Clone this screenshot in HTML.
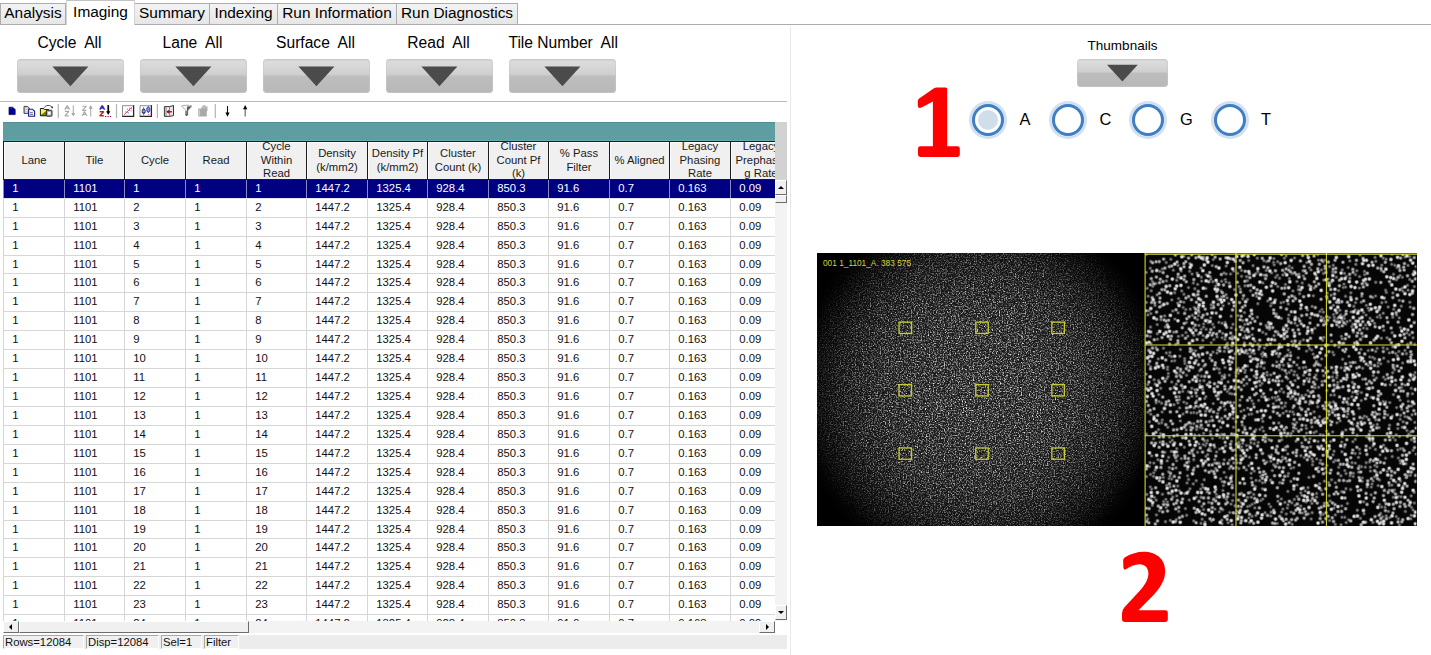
<!DOCTYPE html><html><head><meta charset="utf-8"><title>SAV</title><style>
*{box-sizing:border-box;margin:0;padding:0}
html,body{width:1431px;height:655px;overflow:hidden;background:#fff;font-family:"Liberation Sans",sans-serif;color:#000}
.abs{position:absolute}
#tabs{position:absolute;left:0;top:0;width:1431px;height:25px;border-bottom:1px solid #acacac}
.tab{position:absolute;top:3px;height:22px;background:linear-gradient(#f3f3f3,#e6e6e6);border:1px solid #acacac;font-size:15.4px;line-height:17.5px;text-align:center;white-space:nowrap}
.tab.sel{top:0;height:25px;background:#fff;border-color:#c4c4c4 #d4d4d4;border-bottom:none;line-height:22px;z-index:2}
.flab{position:absolute;top:34px;height:18px;font-size:15.6px;line-height:18px;text-align:center;white-space:pre}
.btn{position:absolute;border-radius:4px;background:linear-gradient(#c9c9c9 0%,#dcdcdc 8%,#cfcfcf 45%,#bdbdbd 52%,#b8b8b8 100%);box-shadow:inset 0 0 0 1px rgba(200,200,200,.6)}
.btn svg{position:absolute;left:0;top:0}
#hline{position:absolute;left:0;top:101px;width:787px;height:1px;background:#b8b8b8}
#vline{position:absolute;left:789.5px;top:26px;width:1.5px;height:629px;background:#e9e9e9}
#teal{position:absolute;left:3px;top:122px;width:772px;height:19px;background:#5f9ea0;border-top:1px solid #4f9092;border-bottom:1px solid #68acae}
#grid{position:absolute;left:3px;top:141px;width:772px;height:480px;overflow:hidden;background:#fff}
.hc{position:absolute;top:0;height:39px;background:#f0f0f0;border:1px solid #1c1c1c;box-shadow:inset 1px 1px 0 #fbfbfb;font-size:11.3px;line-height:13.8px;text-align:center;display:flex;align-items:center;justify-content:center;overflow:hidden;white-space:nowrap;color:#1a1a1a}
.row{position:absolute;left:0;width:772px;height:19px;border-bottom:1px solid #d6d6d6;font-size:11.3px;line-height:17px;color:#111}
.row span{position:absolute;top:0;bottom:0;border-left:1px solid #d6d6d6;padding-left:8.3px;white-space:nowrap}
.row.sel{background:#000080;color:#fff;border-bottom-color:#e6e6ee}
.row.sel span{border-left-color:#8a8ac0}
#vsb{position:absolute;left:775px;top:122px;width:12px;height:499px;background:#f3f3f3}
#vsbtop{position:absolute;left:0;top:0;width:12px;height:58px;background:#d2d2d2}
.sbb{position:absolute;background:#f0f0f0;border:1px solid #fff;border-right-color:#6d6d6d;border-bottom-color:#6d6d6d}
#hsb{position:absolute;left:3px;top:621px;width:772px;height:12px;background:#f3f3f3}
#status{position:absolute;left:3px;top:635px;width:784px;height:14px;background:#ececec;font-size:11.3px;line-height:14px;color:#111}
#status div{position:absolute;top:0;height:14px;background:#f0f0f0;border:1px solid #a8a8a8;border-right-color:#fff;border-bottom-color:#fff;padding-left:1px;line-height:13px;white-space:nowrap}
.rl{position:absolute;top:108.5px;font-size:16.4px;line-height:20px}
.radio{position:absolute;top:100.5px;width:38px;height:38px;border-radius:50%;background:#d3e0ee}
.radio i{position:absolute;left:3px;top:3px;width:32px;height:32px;border-radius:50%;border:3px solid #3d7fc4;background:#fff}
.radio.on i::after{content:"";position:absolute;left:3px;top:3px;width:20px;height:20px;border-radius:50%;background:#d0deec}
</style></head><body>
<div id="tabs">
<div class="tab" style="left:0px;width:66px">Analysis</div>
<div class="tab sel" style="left:66px;width:69px">Imaging</div>
<div class="tab" style="left:134px;width:76px">Summary</div>
<div class="tab" style="left:209px;width:69px">Indexing</div>
<div class="tab" style="left:277px;width:120px">Run Information</div>
<div class="tab" style="left:396px;width:122px">Run Diagnostics</div>
</div>
<div class="flab" style="left:-4px;width:147px">Cycle  All</div>
<div class="btn" style="left:17px;top:58.5px;width:107px;height:34px"><svg width="107" height="34"><polygon points="35.4,7.6 71.4,7.6 53.4,27.3" fill="#4b4b4b"/></svg></div>
<div class="flab" style="left:119px;width:147px">Lane  All</div>
<div class="btn" style="left:140px;top:58.5px;width:107px;height:34px"><svg width="107" height="34"><polygon points="35.4,7.6 71.4,7.6 53.4,27.3" fill="#4b4b4b"/></svg></div>
<div class="flab" style="left:242px;width:147px">Surface  All</div>
<div class="btn" style="left:263px;top:58.5px;width:107px;height:34px"><svg width="107" height="34"><polygon points="35.4,7.6 71.4,7.6 53.4,27.3" fill="#4b4b4b"/></svg></div>
<div class="flab" style="left:365px;width:147px">Read  All</div>
<div class="btn" style="left:386px;top:58.5px;width:107px;height:34px"><svg width="107" height="34"><polygon points="35.4,7.6 71.4,7.6 53.4,27.3" fill="#4b4b4b"/></svg></div>
<div class="flab" style="left:489.7px;width:147px">Tile Number  All</div>
<div class="btn" style="left:509px;top:58.5px;width:107px;height:34px"><svg width="107" height="34"><polygon points="35.4,7.6 71.4,7.6 53.4,27.3" fill="#4b4b4b"/></svg></div>
<div id="hline"></div><div id="vline"></div>
<div id="toolbar" class="abs" style="left:0;top:102px;width:260px;height:20px"><svg width="260" height="20" viewBox="0 102 260 20" style="position:absolute;left:0;top:0" shape-rendering="auto">
<!-- doc -->
<path d="M9 107.200H12.800L15.200 109.600V114.600H9Z" fill="#0000a0" stroke="#00004c" stroke-width=".7"/>
<path d="M9.600 108H12.400" stroke="#3030e8" stroke-width=".8"/>
<path d="M10.300 111.200H13.600" stroke="#101050" stroke-width=".9"/>
<!-- copy -->
<path d="M24 106.400H27.600L29.400 108.200V113.400H24Z" fill="#c4c4c4" stroke="#383838" stroke-width=".9"/>
<path d="M25.200 108.500H27.500M25.200 110.500H28M25.200 112.200H26.800" stroke="#f4f4f4" stroke-width=".8"/>
<path d="M28.600 109.200H32.400L34.600 111.300V116.200H28.600Z" fill="#f2f2f8" stroke="#1818a8" stroke-width="1.100"/>
<path d="M30 112.600H32.800M30 114.400H33" stroke="#666" stroke-width=".9"/>
<!-- folder/print -->
<path d="M40.400 108.500H43.600L44.600 109.600H48.600V115.800H40.400Z" fill="#7c7c00" stroke="#0c0c0c" stroke-width=".9"/>
<path d="M40.900 109H43.400L44.400 110.100H47.600L41 114.800Z" fill="#f2f264"/>
<path d="M44 107.800C46 104.700 50 104.700 52.300 107.300" fill="none" stroke="#222" stroke-width=".8"/>
<path d="M52.900 106.200L52.600 108.600L50.900 107.800Z" fill="#111"/>
<rect x="46.400" y="110.200" width="5.600" height="6" rx=".8" fill="#a8a8a8" stroke="#1c1c1c" stroke-width=".9"/>
<rect x="47.800" y="111.800" width="2.800" height="2.800" fill="#fff"/>
<!-- sep -->
<path d="M58.300 104V118M116.500 104V118M157.400 104V118M215.300 104V118" stroke="#b4b4b4" stroke-width="1.200"/>
<!-- AZ down gray -->
<path d="M64.8 109.6L67.2 105.6L69.6 109.6M65.9 108.1H68.5M64.9 111.4H68.8L64.9 115.8H68.8M82.4 106.2H86.4L82.4 110.4H86.4M82.2 116.0L84.5 111.4L86.8 116.0M83.2 114.3H85.8" fill="none" stroke="#a9a9a9" stroke-width="1.150" stroke-linejoin="bevel"/>
<path d="M73.300 105.200V114" stroke="#b0b0b0" stroke-width="1.100"/><path d="M71.300 112.900L73.300 116.500L75.300 112.900Z" fill="#a6a6a6"/>
<path d="M90.700 107.500V116.400" stroke="#b0b0b0" stroke-width="1.100"/><path d="M88.700 108.800L90.700 104.900L92.700 108.800Z" fill="#a6a6a6"/>
<!-- AZ colored -->
<path d="M99.8 109.7L102.2 105.5L104.6 109.7M100.9 108.1H103.5" fill="none" stroke="#2c2cb4" stroke-width="1.500" stroke-linejoin="bevel"/>
<path d="M99.7 111.8H103.8L99.7 115.7H103.8" fill="none" stroke="#ac2c24" stroke-width="1.400" stroke-linejoin="bevel"/>
<path d="M108.250 105.100V112" stroke="#000" stroke-width="1.700"/><path d="M106.100 111.200H110.400L108.250 114.900Z" fill="#000"/>
<path d="M105 116.500H111.300" stroke="#a8007c" stroke-width="1.100" stroke-dasharray="1.300 1.100"/>
<!-- chart -->
<rect x="122.300" y="105.600" width="11.400" height="10.800" fill="#fff"/>
<path d="M122.500 116.400V105.700H133.500" fill="none" stroke="#8e8e8e" stroke-width="1"/>
<path d="M133.600 105.300V116.300H122.200" fill="none" stroke="#262626" stroke-width="1.300"/>
<path d="M124.200 114.600L131.800 107.400" stroke="#d0485c" stroke-width="1"/>
<path d="M125.300 111.900h.9M127 109.200h.9M126.800 112.300h.9M128.800 110.600h.9M129.200 108.200h.9M130.600 110.900h.9M131 108.800h.9M128 113h.9" stroke="#4860e0" stroke-width=".9"/>
<!-- binoculars -->
<rect x="139.800" y="105.600" width="11.600" height="10.800" fill="#fff"/>
<path d="M140 116.400V105.700H151.300" fill="none" stroke="#8e8e8e" stroke-width="1"/>
<path d="M151.400 105.300V116.300H139.700" fill="none" stroke="#262626" stroke-width="1.300"/>
<rect x="142.200" y="109.200" width="3" height="4.200" rx="1.300" fill="#3c4cf0" stroke="#202028" stroke-width=".8"/>
<path d="M142.600 111.100H144.800" stroke="#fff" stroke-width=".8"/>
<rect x="146.800" y="107.400" width="3" height="4.400" rx="1.300" fill="#8c94f8" stroke="#202028" stroke-width=".8"/>
<path d="M142.900 108.700L143.700 106.900L144.500 108.700ZM147.500 107L148.300 105.900L149.100 107ZM142.900 113.700L143.700 115L144.500 113.700ZM147.500 112.100L148.300 113.300L149.100 112.100Z" fill="#2030d0"/>
<path d="M143.300 115.800h.9M148 114.500h.9" stroke="#f05078" stroke-width=".9"/>
<!-- column arrow -->
<path d="M164.400 106.600H169.600V116.400H164.400Z" fill="#f0f0f0" stroke="#222" stroke-width=".9"/>
<path d="M169.600 106.600L173.500 105.500V115.600L169.600 116.400" fill="#e4e4e4" stroke="#222" stroke-width=".9"/>
<path d="M166 106.600V116.400" stroke="#555" stroke-width=".7"/>
<path d="M167.300 111.800H172" stroke="#a00010" stroke-width="1.200"/><path d="M166.300 111.800L168.900 109.800V113.800Z" fill="#a00010"/>
<!-- funnel -->
<path d="M181.600 106C184 104.900 189.500 104.900 191.900 106L187.800 110.600V114.800L186 115.600V110.600Z" fill="#f4f4f4" stroke="#9a9a9a" stroke-width=".8"/>
<path d="M187 106.600L191.600 106.200L187.800 110.600V114.800L186.800 115.300Z" fill="#5a5a5a"/>
<path d="M186 111V115.500L187.700 114.800" stroke="#2a2a2a" stroke-width=".8" fill="none"/>
<!-- hand -->
<path d="M198.300 108.600H201.600V106.400H202.700V105.600H203.900V105.200H205.100V105.700H206.300V106.600H207.500V110.500L206.800 111.500V116.400H198.300Z" fill="#a9a9a9"/>
<path d="M199.600 109.800V115.600" stroke="#d4d4d4" stroke-width=".9"/>
<path d="M202.900 106V108.500M204.100 105.600V108.500M205.300 106V108.500M206.500 107V108.800" stroke="#dcdcdc" stroke-width=".5"/>
<!-- arrows -->
<path d="M227.500 106V114" stroke="#111" stroke-width="1.100"/><path d="M225.400 112.600L227.500 116.800L229.600 112.600Z" fill="#000"/>
<path d="M245.200 108V116.600" stroke="#808080" stroke-width="1.400"/><path d="M243.100 109.200L245.200 105L247.300 109.200Z" fill="#000"/>
</svg>
</div>
<div id="teal"></div>
<div id="grid">
<div class="hc" style="left:0px;width:62px"><div>Lane</div></div>
<div class="hc" style="left:61px;width:61px"><div>Tile</div></div>
<div class="hc" style="left:121px;width:62px"><div>Cycle</div></div>
<div class="hc" style="left:182px;width:62px"><div>Read</div></div>
<div class="hc" style="left:243px;width:61px"><div>Cycle<br>Within<br>Read</div></div>
<div class="hc" style="left:303px;width:62px"><div>Density<br>(k/mm2)</div></div>
<div class="hc" style="left:364px;width:61px"><div>Density Pf<br>(k/mm2)</div></div>
<div class="hc" style="left:424px;width:62px"><div>Cluster<br>Count (k)</div></div>
<div class="hc" style="left:485px;width:61px"><div>Cluster<br>Count Pf<br>(k)</div></div>
<div class="hc" style="left:545px;width:62px"><div>% Pass<br>Filter</div></div>
<div class="hc" style="left:606px;width:61px"><div>% Aligned</div></div>
<div class="hc" style="left:666px;width:62px"><div>Legacy<br>Phasing<br>Rate</div></div>
<div class="hc" style="left:727px;width:62px"><div>Legacy<br>Prephasin<br>g Rate</div></div>
<div class="row sel" style="top:39px;height:19px">
<span style="left:0px;width:61px">1</span>
<span style="left:61px;width:60px">1101</span>
<span style="left:121px;width:61px">1</span>
<span style="left:182px;width:61px">1</span>
<span style="left:243px;width:60px">1</span>
<span style="left:303px;width:61px">1447.2</span>
<span style="left:364px;width:60px">1325.4</span>
<span style="left:424px;width:61px">928.4</span>
<span style="left:485px;width:60px">850.3</span>
<span style="left:545px;width:61px">91.6</span>
<span style="left:606px;width:60px">0.7</span>
<span style="left:666px;width:61px">0.163</span>
<span style="left:727px;width:45px">0.09</span>
</div>
<div class="row" style="top:58px;height:19px">
<span style="left:0px;width:61px">1</span>
<span style="left:61px;width:60px">1101</span>
<span style="left:121px;width:61px">2</span>
<span style="left:182px;width:61px">1</span>
<span style="left:243px;width:60px">2</span>
<span style="left:303px;width:61px">1447.2</span>
<span style="left:364px;width:60px">1325.4</span>
<span style="left:424px;width:61px">928.4</span>
<span style="left:485px;width:60px">850.3</span>
<span style="left:545px;width:61px">91.6</span>
<span style="left:606px;width:60px">0.7</span>
<span style="left:666px;width:61px">0.163</span>
<span style="left:727px;width:45px">0.09</span>
</div>
<div class="row" style="top:77px;height:19px">
<span style="left:0px;width:61px">1</span>
<span style="left:61px;width:60px">1101</span>
<span style="left:121px;width:61px">3</span>
<span style="left:182px;width:61px">1</span>
<span style="left:243px;width:60px">3</span>
<span style="left:303px;width:61px">1447.2</span>
<span style="left:364px;width:60px">1325.4</span>
<span style="left:424px;width:61px">928.4</span>
<span style="left:485px;width:60px">850.3</span>
<span style="left:545px;width:61px">91.6</span>
<span style="left:606px;width:60px">0.7</span>
<span style="left:666px;width:61px">0.163</span>
<span style="left:727px;width:45px">0.09</span>
</div>
<div class="row" style="top:96px;height:19px">
<span style="left:0px;width:61px">1</span>
<span style="left:61px;width:60px">1101</span>
<span style="left:121px;width:61px">4</span>
<span style="left:182px;width:61px">1</span>
<span style="left:243px;width:60px">4</span>
<span style="left:303px;width:61px">1447.2</span>
<span style="left:364px;width:60px">1325.4</span>
<span style="left:424px;width:61px">928.4</span>
<span style="left:485px;width:60px">850.3</span>
<span style="left:545px;width:61px">91.6</span>
<span style="left:606px;width:60px">0.7</span>
<span style="left:666px;width:61px">0.163</span>
<span style="left:727px;width:45px">0.09</span>
</div>
<div class="row" style="top:115px;height:18px">
<span style="left:0px;width:61px">1</span>
<span style="left:61px;width:60px">1101</span>
<span style="left:121px;width:61px">5</span>
<span style="left:182px;width:61px">1</span>
<span style="left:243px;width:60px">5</span>
<span style="left:303px;width:61px">1447.2</span>
<span style="left:364px;width:60px">1325.4</span>
<span style="left:424px;width:61px">928.4</span>
<span style="left:485px;width:60px">850.3</span>
<span style="left:545px;width:61px">91.6</span>
<span style="left:606px;width:60px">0.7</span>
<span style="left:666px;width:61px">0.163</span>
<span style="left:727px;width:45px">0.09</span>
</div>
<div class="row" style="top:133px;height:19px">
<span style="left:0px;width:61px">1</span>
<span style="left:61px;width:60px">1101</span>
<span style="left:121px;width:61px">6</span>
<span style="left:182px;width:61px">1</span>
<span style="left:243px;width:60px">6</span>
<span style="left:303px;width:61px">1447.2</span>
<span style="left:364px;width:60px">1325.4</span>
<span style="left:424px;width:61px">928.4</span>
<span style="left:485px;width:60px">850.3</span>
<span style="left:545px;width:61px">91.6</span>
<span style="left:606px;width:60px">0.7</span>
<span style="left:666px;width:61px">0.163</span>
<span style="left:727px;width:45px">0.09</span>
</div>
<div class="row" style="top:152px;height:19px">
<span style="left:0px;width:61px">1</span>
<span style="left:61px;width:60px">1101</span>
<span style="left:121px;width:61px">7</span>
<span style="left:182px;width:61px">1</span>
<span style="left:243px;width:60px">7</span>
<span style="left:303px;width:61px">1447.2</span>
<span style="left:364px;width:60px">1325.4</span>
<span style="left:424px;width:61px">928.4</span>
<span style="left:485px;width:60px">850.3</span>
<span style="left:545px;width:61px">91.6</span>
<span style="left:606px;width:60px">0.7</span>
<span style="left:666px;width:61px">0.163</span>
<span style="left:727px;width:45px">0.09</span>
</div>
<div class="row" style="top:171px;height:19px">
<span style="left:0px;width:61px">1</span>
<span style="left:61px;width:60px">1101</span>
<span style="left:121px;width:61px">8</span>
<span style="left:182px;width:61px">1</span>
<span style="left:243px;width:60px">8</span>
<span style="left:303px;width:61px">1447.2</span>
<span style="left:364px;width:60px">1325.4</span>
<span style="left:424px;width:61px">928.4</span>
<span style="left:485px;width:60px">850.3</span>
<span style="left:545px;width:61px">91.6</span>
<span style="left:606px;width:60px">0.7</span>
<span style="left:666px;width:61px">0.163</span>
<span style="left:727px;width:45px">0.09</span>
</div>
<div class="row" style="top:190px;height:19px">
<span style="left:0px;width:61px">1</span>
<span style="left:61px;width:60px">1101</span>
<span style="left:121px;width:61px">9</span>
<span style="left:182px;width:61px">1</span>
<span style="left:243px;width:60px">9</span>
<span style="left:303px;width:61px">1447.2</span>
<span style="left:364px;width:60px">1325.4</span>
<span style="left:424px;width:61px">928.4</span>
<span style="left:485px;width:60px">850.3</span>
<span style="left:545px;width:61px">91.6</span>
<span style="left:606px;width:60px">0.7</span>
<span style="left:666px;width:61px">0.163</span>
<span style="left:727px;width:45px">0.09</span>
</div>
<div class="row" style="top:209px;height:19px">
<span style="left:0px;width:61px">1</span>
<span style="left:61px;width:60px">1101</span>
<span style="left:121px;width:61px">10</span>
<span style="left:182px;width:61px">1</span>
<span style="left:243px;width:60px">10</span>
<span style="left:303px;width:61px">1447.2</span>
<span style="left:364px;width:60px">1325.4</span>
<span style="left:424px;width:61px">928.4</span>
<span style="left:485px;width:60px">850.3</span>
<span style="left:545px;width:61px">91.6</span>
<span style="left:606px;width:60px">0.7</span>
<span style="left:666px;width:61px">0.163</span>
<span style="left:727px;width:45px">0.09</span>
</div>
<div class="row" style="top:228px;height:19px">
<span style="left:0px;width:61px">1</span>
<span style="left:61px;width:60px">1101</span>
<span style="left:121px;width:61px">11</span>
<span style="left:182px;width:61px">1</span>
<span style="left:243px;width:60px">11</span>
<span style="left:303px;width:61px">1447.2</span>
<span style="left:364px;width:60px">1325.4</span>
<span style="left:424px;width:61px">928.4</span>
<span style="left:485px;width:60px">850.3</span>
<span style="left:545px;width:61px">91.6</span>
<span style="left:606px;width:60px">0.7</span>
<span style="left:666px;width:61px">0.163</span>
<span style="left:727px;width:45px">0.09</span>
</div>
<div class="row" style="top:247px;height:19px">
<span style="left:0px;width:61px">1</span>
<span style="left:61px;width:60px">1101</span>
<span style="left:121px;width:61px">12</span>
<span style="left:182px;width:61px">1</span>
<span style="left:243px;width:60px">12</span>
<span style="left:303px;width:61px">1447.2</span>
<span style="left:364px;width:60px">1325.4</span>
<span style="left:424px;width:61px">928.4</span>
<span style="left:485px;width:60px">850.3</span>
<span style="left:545px;width:61px">91.6</span>
<span style="left:606px;width:60px">0.7</span>
<span style="left:666px;width:61px">0.163</span>
<span style="left:727px;width:45px">0.09</span>
</div>
<div class="row" style="top:266px;height:19px">
<span style="left:0px;width:61px">1</span>
<span style="left:61px;width:60px">1101</span>
<span style="left:121px;width:61px">13</span>
<span style="left:182px;width:61px">1</span>
<span style="left:243px;width:60px">13</span>
<span style="left:303px;width:61px">1447.2</span>
<span style="left:364px;width:60px">1325.4</span>
<span style="left:424px;width:61px">928.4</span>
<span style="left:485px;width:60px">850.3</span>
<span style="left:545px;width:61px">91.6</span>
<span style="left:606px;width:60px">0.7</span>
<span style="left:666px;width:61px">0.163</span>
<span style="left:727px;width:45px">0.09</span>
</div>
<div class="row" style="top:285px;height:19px">
<span style="left:0px;width:61px">1</span>
<span style="left:61px;width:60px">1101</span>
<span style="left:121px;width:61px">14</span>
<span style="left:182px;width:61px">1</span>
<span style="left:243px;width:60px">14</span>
<span style="left:303px;width:61px">1447.2</span>
<span style="left:364px;width:60px">1325.4</span>
<span style="left:424px;width:61px">928.4</span>
<span style="left:485px;width:60px">850.3</span>
<span style="left:545px;width:61px">91.6</span>
<span style="left:606px;width:60px">0.7</span>
<span style="left:666px;width:61px">0.163</span>
<span style="left:727px;width:45px">0.09</span>
</div>
<div class="row" style="top:304px;height:19px">
<span style="left:0px;width:61px">1</span>
<span style="left:61px;width:60px">1101</span>
<span style="left:121px;width:61px">15</span>
<span style="left:182px;width:61px">1</span>
<span style="left:243px;width:60px">15</span>
<span style="left:303px;width:61px">1447.2</span>
<span style="left:364px;width:60px">1325.4</span>
<span style="left:424px;width:61px">928.4</span>
<span style="left:485px;width:60px">850.3</span>
<span style="left:545px;width:61px">91.6</span>
<span style="left:606px;width:60px">0.7</span>
<span style="left:666px;width:61px">0.163</span>
<span style="left:727px;width:45px">0.09</span>
</div>
<div class="row" style="top:323px;height:19px">
<span style="left:0px;width:61px">1</span>
<span style="left:61px;width:60px">1101</span>
<span style="left:121px;width:61px">16</span>
<span style="left:182px;width:61px">1</span>
<span style="left:243px;width:60px">16</span>
<span style="left:303px;width:61px">1447.2</span>
<span style="left:364px;width:60px">1325.4</span>
<span style="left:424px;width:61px">928.4</span>
<span style="left:485px;width:60px">850.3</span>
<span style="left:545px;width:61px">91.6</span>
<span style="left:606px;width:60px">0.7</span>
<span style="left:666px;width:61px">0.163</span>
<span style="left:727px;width:45px">0.09</span>
</div>
<div class="row" style="top:342px;height:19px">
<span style="left:0px;width:61px">1</span>
<span style="left:61px;width:60px">1101</span>
<span style="left:121px;width:61px">17</span>
<span style="left:182px;width:61px">1</span>
<span style="left:243px;width:60px">17</span>
<span style="left:303px;width:61px">1447.2</span>
<span style="left:364px;width:60px">1325.4</span>
<span style="left:424px;width:61px">928.4</span>
<span style="left:485px;width:60px">850.3</span>
<span style="left:545px;width:61px">91.6</span>
<span style="left:606px;width:60px">0.7</span>
<span style="left:666px;width:61px">0.163</span>
<span style="left:727px;width:45px">0.09</span>
</div>
<div class="row" style="top:361px;height:19px">
<span style="left:0px;width:61px">1</span>
<span style="left:61px;width:60px">1101</span>
<span style="left:121px;width:61px">18</span>
<span style="left:182px;width:61px">1</span>
<span style="left:243px;width:60px">18</span>
<span style="left:303px;width:61px">1447.2</span>
<span style="left:364px;width:60px">1325.4</span>
<span style="left:424px;width:61px">928.4</span>
<span style="left:485px;width:60px">850.3</span>
<span style="left:545px;width:61px">91.6</span>
<span style="left:606px;width:60px">0.7</span>
<span style="left:666px;width:61px">0.163</span>
<span style="left:727px;width:45px">0.09</span>
</div>
<div class="row" style="top:380px;height:18px">
<span style="left:0px;width:61px">1</span>
<span style="left:61px;width:60px">1101</span>
<span style="left:121px;width:61px">19</span>
<span style="left:182px;width:61px">1</span>
<span style="left:243px;width:60px">19</span>
<span style="left:303px;width:61px">1447.2</span>
<span style="left:364px;width:60px">1325.4</span>
<span style="left:424px;width:61px">928.4</span>
<span style="left:485px;width:60px">850.3</span>
<span style="left:545px;width:61px">91.6</span>
<span style="left:606px;width:60px">0.7</span>
<span style="left:666px;width:61px">0.163</span>
<span style="left:727px;width:45px">0.09</span>
</div>
<div class="row" style="top:398px;height:19px">
<span style="left:0px;width:61px">1</span>
<span style="left:61px;width:60px">1101</span>
<span style="left:121px;width:61px">20</span>
<span style="left:182px;width:61px">1</span>
<span style="left:243px;width:60px">20</span>
<span style="left:303px;width:61px">1447.2</span>
<span style="left:364px;width:60px">1325.4</span>
<span style="left:424px;width:61px">928.4</span>
<span style="left:485px;width:60px">850.3</span>
<span style="left:545px;width:61px">91.6</span>
<span style="left:606px;width:60px">0.7</span>
<span style="left:666px;width:61px">0.163</span>
<span style="left:727px;width:45px">0.09</span>
</div>
<div class="row" style="top:417px;height:19px">
<span style="left:0px;width:61px">1</span>
<span style="left:61px;width:60px">1101</span>
<span style="left:121px;width:61px">21</span>
<span style="left:182px;width:61px">1</span>
<span style="left:243px;width:60px">21</span>
<span style="left:303px;width:61px">1447.2</span>
<span style="left:364px;width:60px">1325.4</span>
<span style="left:424px;width:61px">928.4</span>
<span style="left:485px;width:60px">850.3</span>
<span style="left:545px;width:61px">91.6</span>
<span style="left:606px;width:60px">0.7</span>
<span style="left:666px;width:61px">0.163</span>
<span style="left:727px;width:45px">0.09</span>
</div>
<div class="row" style="top:436px;height:19px">
<span style="left:0px;width:61px">1</span>
<span style="left:61px;width:60px">1101</span>
<span style="left:121px;width:61px">22</span>
<span style="left:182px;width:61px">1</span>
<span style="left:243px;width:60px">22</span>
<span style="left:303px;width:61px">1447.2</span>
<span style="left:364px;width:60px">1325.4</span>
<span style="left:424px;width:61px">928.4</span>
<span style="left:485px;width:60px">850.3</span>
<span style="left:545px;width:61px">91.6</span>
<span style="left:606px;width:60px">0.7</span>
<span style="left:666px;width:61px">0.163</span>
<span style="left:727px;width:45px">0.09</span>
</div>
<div class="row" style="top:455px;height:19px">
<span style="left:0px;width:61px">1</span>
<span style="left:61px;width:60px">1101</span>
<span style="left:121px;width:61px">23</span>
<span style="left:182px;width:61px">1</span>
<span style="left:243px;width:60px">23</span>
<span style="left:303px;width:61px">1447.2</span>
<span style="left:364px;width:60px">1325.4</span>
<span style="left:424px;width:61px">928.4</span>
<span style="left:485px;width:60px">850.3</span>
<span style="left:545px;width:61px">91.6</span>
<span style="left:606px;width:60px">0.7</span>
<span style="left:666px;width:61px">0.163</span>
<span style="left:727px;width:45px">0.09</span>
</div>
<div class="row" style="top:474px;height:19px">
<span style="left:0px;width:61px">1</span>
<span style="left:61px;width:60px">1101</span>
<span style="left:121px;width:61px">24</span>
<span style="left:182px;width:61px">1</span>
<span style="left:243px;width:60px">24</span>
<span style="left:303px;width:61px">1447.2</span>
<span style="left:364px;width:60px">1325.4</span>
<span style="left:424px;width:61px">928.4</span>
<span style="left:485px;width:60px">850.3</span>
<span style="left:545px;width:61px">91.6</span>
<span style="left:606px;width:60px">0.7</span>
<span style="left:666px;width:61px">0.163</span>
<span style="left:727px;width:45px">0.09</span>
</div>
</div>
<div id="vsb"><div id="vsbtop"></div>
<div class="sbb" style="left:0;top:58px;width:12px;height:15px"><svg width="10" height="13" class="abs" style="left:0;top:0"><polygon points="2,8 8,8 5,5" fill="#000"/></svg></div>
<div class="sbb" style="left:0;top:73px;width:12px;height:8px"></div>
<div class="sbb" style="left:0;top:483px;width:12px;height:15px"><svg width="10" height="13" class="abs" style="left:0;top:0"><polygon points="2,5 8,5 5,8" fill="#000"/></svg></div>
</div>
<div id="hsb">
<div class="sbb" style="left:0;top:0;width:16px;height:12px"><svg width="14" height="10" class="abs" style="left:0;top:0"><polygon points="8,2 8,8 5,5" fill="#000"/></svg></div>
<div class="sbb" style="left:16px;top:0;width:230px;height:12px"></div>
<div class="sbb" style="left:756px;top:0;width:16px;height:12px"><svg width="14" height="10" class="abs" style="left:0;top:0"><polygon points="6,2 6,8 9,5" fill="#000"/></svg></div>
</div>
<div id="status"><div style="left:0;width:81px">Rows=12084</div><div style="left:83px;width:73px">Disp=12084</div><div style="left:158px;width:41px">Sel=1</div><div style="left:201px;width:35px">Filter</div></div>
<div class="abs" style="left:1062.5px;top:37.6px;width:120px;text-align:center;font-size:13.5px;line-height:16px">Thumbnails</div>
<div class="btn" style="left:1076.5px;top:58.5px;width:91px;height:28px"><svg width="91" height="28"><polygon points="30,5.8 60.8,5.8 45.4,22.6" fill="#4b4b4b"/></svg></div>
<div class="radio on" style="left:969px"><i></i></div><div class="rl" style="left:1019.5px">A</div>
<div class="radio" style="left:1048.5px"><i></i></div><div class="rl" style="left:1099.5px">C</div>
<div class="radio" style="left:1129px"><i></i></div><div class="rl" style="left:1180px">G</div>
<div class="radio" style="left:1210.5px"><i></i></div><div class="rl" style="left:1261px">T</div>
<svg width="60" height="80" viewBox="910 82 60 80" style="position:absolute;left:910px;top:82px"><path fill="#fe0000" d="M936.500 87.400H945.700Q947.200 87.400 947.200 88.900V146.200H957.500Q959.800 146.200 959.800 148.500V154.600Q959.800 156.900 957.500 156.900H920.300Q918 156.900 918 154.600V148.500Q918 146.200 920.300 146.200H932.900V101.600L921.500 107.600Q918 109 917.800 105.500V101Q917.800 99.300 919.500 98.300L934 88.300Q935.300 87.400 936.500 87.400Z"/></svg>
<svg width="60" height="80" viewBox="1115 547 60 80" style="position:absolute;left:1115px;top:547px"><path fill="#fe0000" d="M1123.200 561.500Q1122.800 558.500 1125.500 557C1131 553.800 1137.500 551.800 1143.500 551.800C1156 551.800 1165.200 559 1165.200 571C1165.200 580 1160.500 587 1154 594.500L1138.500 610.300H1165.500Q1167.800 610.300 1167.800 612.600V619.600Q1167.800 621.900 1165.500 621.900H1125Q1122 621.900 1122 618.900V613.500Q1122 610 1124.500 607.300L1140 590.500C1145.500 584 1148.400 579 1148.400 573.500C1148.400 568 1145 564.300 1139.500 564.300C1134.500 564.300 1130 566.500 1126.300 569Q1123.600 570.800 1123.400 567.500Z"/></svg>

<div id="img" class="abs" style="left:817px;top:253px;width:600px;height:273px;background:#000"><svg width="600" height="273" viewBox="0 0 600 273" style="position:absolute;left:0;top:0">
<defs>
<filter id="nf" x="0" y="0" width="100%" height="100%" color-interpolation-filters="sRGB">
<feTurbulence type="fractalNoise" baseFrequency="0.73" numOctaves="2" seed="7" result="t"/>
<feColorMatrix in="t" type="matrix" values="0 0 0 0 0  0 0 0 0 0  0 0 0 0 0  1.8 1.8 0 0 -1.68" result="a"/>
<feFlood flood-color="#fff"/>
<feComposite in2="a" operator="in"/>
<feGaussianBlur stdDeviation="0.6"/>
</filter>
<filter id="bl" x="-2%" y="-2%" width="104%" height="104%"><feGaussianBlur stdDeviation="0.7"/></filter>
<radialGradient id="vg" cx="0.5" cy="0.5" r="0.5">
<stop offset="0" stop-color="#fff" stop-opacity="1"/>
<stop offset="0.35" stop-color="#fff" stop-opacity="0.92"/>
<stop offset="0.55" stop-color="#fff" stop-opacity="0.8"/>
<stop offset="0.72" stop-color="#fff" stop-opacity="0.58"/>
<stop offset="0.86" stop-color="#fff" stop-opacity="0.28"/>
<stop offset="0.95" stop-color="#fff" stop-opacity="0.06"/>
<stop offset="1" stop-color="#fff" stop-opacity="0"/>
</radialGradient>
<mask id="vm"><rect x="-24" y="-50" width="374" height="374" fill="url(#vg)"/></mask>
<path id="dg0" d="M499.1 215.9h.1M463.9 180.5h.1M598.4 270.8h.1M587.7 230.6h.1M574.8 128.4h.1M593.7 108.7h.1M539.2 74.1h.1M589.3 206.4h.1M360.9 67.8h.1M364.4 175.4h.1M591.2 218.7h.1M356.1 269.1h.1M484.1 235.8h.1M382.1 258.5h.1M442.8 29.1h.1M393.4 191.9h.1M398.4 224.2h.1M494.9 76.9h.1M376.6 100.9h.1M426.8 242.4h.1M333.8 247.7h.1M334.7 173.4h.1M543.2 249h.1M562.1 156.2h.1M486.3 166h.1M410.3 184.8h.1M573.5 179.9h.1M403.7 46.8h.1M520.3 155.6h.1M513.8 55h.1M457.3 49.4h.1M435.2 215.6h.1M573.7 24.6h.1M497.9 247.6h.1M566.4 216.9h.1M583.9 126.7h.1M502.2 195.5h.1M407.3 198.5h.1M413.2 104.3h.1M492.4 8.5h.1M549.2 245.1h.1M578.8 36.1h.1M357.3 199.1h.1M387.9 271.6h.1M399.1 27.3h.1M553.7 115.3h.1M333.8 55.5h.1M357.7 11.1h.1M478 140.5h.1M417.2 127.5h.1M491.3 4.6h.1M377.9 124h.1M381.7 45.7h.1M530 211.8h.1M524.1 20.1h.1M421.3 128.1h.1M501.5 170.1h.1M391.7 257h.1M508.8 92.5h.1M593.6 7.2h.1M471.2 163h.1M405.6 195.2h.1M591.8 67h.1M471.6 34.7h.1M539.1 144.8h.1M598.4 259.2h.1M514 154.1h.1M532.4 52.4h.1M339.7 17.5h.1M349.1 33.5h.1M536.6 58.8h.1M355.2 238.2h.1M351.1 83.3h.1M425.6 197.7h.1M335 140.7h.1M504.2 67.5h.1M435.5 92.5h.1M523.7 192.9h.1M587.6 174.5h.1M442.5 40.6h.1M407.8 263.8h.1M345.8 125.3h.1M486.7 247.4h.1M378.8 59.9h.1M545.4 105.3h.1M403.1 269.4h.1M521.6 165.2h.1M501 270.1h.1M351.3 74.1h.1M560.5 83.3h.1M576.5 25.6h.1M455.2 194.8h.1M426.1 187.2h.1M544.9 57h.1M434.9 181.7h.1M584.2 153.5h.1M552.3 26h.1M512 192.9h.1M377.6 110h.1M353.3 62.4h.1M594.1 215h.1M357.7 103.3h.1M574.5 269.9h.1M553.3 51.3h.1M482.8 48.1h.1M469.3 72.5h.1M497.4 187.8h.1M439.4 118.6h.1M415.6 15.8h.1M524.9 244.9h.1M526.6 162.9h.1M464.7 108.5h.1M411.7 108.2h.1M575 262.9h.1M585.8 1.2h.1M570.7 222h.1M436.3 97.6h.1M566.5 270.8h.1M380.7 239.5h.1M520.8 54.2h.1M429.6 180.4h.1M390.8 82.6h.1M490.9 78.1h.1M352.5 78.3h.1M595.7 10.1h.1M453.6 204.4h.1M392.7 133.6h.1M333.8 135.4h.1M482.6 148.2h.1M496.7 143.4h.1M375.3 70.1h.1M345.5 112.3h.1M461.2 207.3h.1M443.6 21.7h.1M478 66.5h.1M427.3 92.3h.1M597.2 185.1h.1M573.9 6.5h.1M413.3 115.9h.1M524.9 181.5h.1M387.3 12h.1M499.8 25.4h.1M345.2 104.9h.1M437.7 129.8h.1M374 181.3h.1M487.2 128.1h.1M399.7 182h.1M379.2 128.2h.1M412.3 98.7h.1M592.8 41.6h.1M480.4 226.2h.1M413.6 195h.1M516.8 187.1h.1M393 68.6h.1M416.7 49.2h.1M356.6 192h.1M397.6 138.5h.1M522.3 69.2h.1M522.2 89.6h.1M475.5 131.9h.1M429.8 84.8h.1M405.6 107.1h.1M416.4 6.2h.1M506.4 169.8h.1M562.4 270.5h.1M448.7 226.9h.1M336.2 46.8h.1M512.7 49h.1M423.6 117.7h.1M331.5 137.2h.1M384.3 239.6h.1M415.6 205.4h.1M445.1 261.9h.1M584.9 88.3h.1M500.4 103.5h.1M495.4 241.5h.1M359.8 228h.1M468.1 9.7h.1M489.2 162.1h.1M580.5 42.2h.1M437.6 236.1h.1M363.2 269.3h.1M461.6 64.4h.1M555.9 176.9h.1M582.2 225.7h.1M563.9 193.9h.1M562.7 54.1h.1M541.5 134h.1M565.7 198.2h.1M420.7 86.5h.1M363.9 32.4h.1M511.7 124.3h.1M581.1 106h.1M442.2 77.2h.1M550.5 231.4h.1M455.7 99h.1M454.5 86.6h.1M591 265.6h.1M597 108.1h.1M385.5 101.2h.1M497.2 202.1h.1M364 24.9h.1M467.3 80.7h.1M440.8 15.7h.1M341.4 113.8h.1M445.2 123.2h.1M389.1 27.9h.1M531.4 133.1h.1M589.9 2.9h.1M553.5 89.9h.1M344.3 207.9h.1M359.6 33.1h.1M433.9 156.6h.1M574.6 124.5h.1M532.3 28.7h.1M411.8 230.7h.1M482.4 150.5h.1M418.9 42.1h.1M585.7 208.2h.1M546.6 27.5h.1M540.7 60.2h.1M382.8 146h.1M535.5 158.8h.1M571.8 251.4h.1M564.9 44.4h.1M527.2 145.9h.1M538.3 71.4h.1M343.7 254.8h.1M392 123.7h.1M469.7 21.9h.1M519.4 114.1h.1M560.8 254.4h.1M471.1 91.9h.1M376.4 41.6h.1M540.6 91.2h.1M395 60h.1M440.9 269.2h.1M489.2 201.9h.1M431.7 18.6h.1M585.3 124h.1M422.8 14.3h.1M578.5 137.5h.1M372.3 90.5h.1M380.5 256.8h.1M581.7 232.2h.1M406.9 47.3h.1M524.3 64.7h.1M584.8 78h.1M463.3 251h.1M459.1 174.8h.1M545 64.5h.1M461.3 131.7h.1M593.2 249.5h.1M549 83.2h.1M346.4 181.8h.1M379.2 189.1h.1M482.7 256.7h.1M514.3 256.3h.1M587.9 34h.1M534.9 151.4h.1M536.1 176.5h.1M457.2 259.7h.1M568.9 16.2h.1M363.7 15.8h.1M455.5 29.6h.1M414.2 267.6h.1M388.7 235.6h.1M451.3 86.5h.1M451.9 129.3h.1M529.1 81.3h.1M421.3 193.9h.1M494.7 60.9h.1M595.5 38h.1M471.6 135.2h.1M424.2 206.7h.1M474.1 7.5h.1M396.4 49.2h.1M345.9 228.9h.1M425.1 98.6h.1M412.8 161.4h.1M401.5 31.6h.1M440.6 106.7h.1M541.9 242.9h.1M410.3 9.6h.1M576.6 227.4h.1M596.4 21.5h.1M480.9 255.6h.1M548.9 197.2h.1M500.5 167.7h.1M581.5 12.8h.1M551.4 69.4h.1M346.8 51.5h.1M557 190.8h.1M350.1 235.3h.1M455.3 229.7h.1M557.5 164h.1M466.1 106.2h.1M419.7 3.5h.1M531.6 213.5h.1M587.9 244.3h.1M560.4 268.4h.1M558.3 54.8h.1M479.3 93h.1M329.5 89.9h.1M501.2 18.7h.1M436.3 85.8h.1M540.4 263h.1M526.3 156.1h.1M476.9 233h.1M390.9 9.1h.1M510.2 198.4h.1M567.7 151.2h.1M400.1 164h.1M596.4 215.8h.1M465.5 218.9h.1M436.9 22.5h.1M581.6 91.8h.1M572.2 215.3h.1M340 137.6h.1M585.5 235.4h.1M414.7 46.6h.1M529.8 206.8h.1M552.1 135.5h.1M503 99.8h.1M428.6 48.7h.1M363.7 191.4h.1M490.4 167.2h.1M577.7 83h.1M569.8 23.8h.1M383.4 79.8h.1M333.1 123.8h.1M490.6 87.6h.1M338.4 115.1h.1M424.5 264.5h.1M426.1 251h.1M353.3 152h.1M355.3 26.1h.1M472.1 113.1h.1M353.9 40.3h.1M447.5 127.1h.1M453.8 70.7h.1M582 57.5h.1M455.3 101.3h.1M543.3 71.9h.1M555.6 185.5h.1M342.7 78.4h.1M401.9 15h.1M409.1 81.8h.1M541 151.8h.1M462.2 94.2h.1M531.8 137.4h.1M542.9 227.5h.1M570.3 197.7h.1M490.6 247.1h.1M373.4 153.6h.1M350.9 193.2h.1M581.4 144h.1M446.5 162.5h.1M556 12.3h.1M493.4 199.3h.1M453.1 5h.1M553.3 170.3h.1M596.5 126.3h.1M332 89.3h.1M515.5 27.4h.1M362.6 163.1h.1M420.7 265.9h.1M390.1 4.9h.1M512.1 32.6h.1M406.5 241.9h.1M373.1 14.3h.1M428.4 258.8h.1M413.7 225.2h.1M472.8 28.9h.1M337 166.1h.1M428.6 247.6h.1M347.1 81h.1M340.4 239.6h.1M434.2 267.8h.1M367.9 134.1h.1M452.8 18h.1M443.7 38.2h.1M563.1 151h.1M503.5 172.4h.1M422.3 259.6h.1M503.6 85.2h.1M554.3 266.7h.1M492 254.5h.1M502.3 235.1h.1M336.5 100.4h.1M404.2 56h.1M381.2 22.6h.1M470.4 47.6h.1M495.4 149.7h.1M590.9 131.4h.1M373.9 139.6h.1M521.3 47.1h.1M468.6 271.1h.1M448.1 236.7h.1M398.1 234.1h.1M414.1 134.1h.1M383.1 134.2h.1M536.1 122h.1M368.8 185.1h.1M449.2 146.9h.1M541.1 68.3h.1M539.6 29.1h.1M536.5 134.4h.1M436.8 34.7h.1M434.6 210.4h.1M332.4 199.9h.1M536.2 64.4h.1M556.3 145h.1M566.7 268.2h.1M492.9 117.3h.1M404.1 130h.1M334.2 239.6h.1M462.9 222.5h.1M407.9 150.4h.1M384.5 207.6h.1M498.6 232.6h.1M493.3 179.4h.1M394.9 259h.1M372.4 109.4h.1M444.5 265.1h.1M368.9 181.6h.1M440.6 260h.1M336.1 143.1h.1M350.4 39h.1M357.6 118.1h.1M537.1 263.4h.1M433.7 108.2h.1M561.5 138.4h.1M515.8 22.5h.1M339.4 167.7h.1M453.2 45.9h.1M374.2 12.2h.1M391.1 23.1h.1M518.3 57.1h.1M531.7 3.7h.1M375.5 87.7h.1M481.8 24h.1M464.7 265.7h.1M402.3 243.9h.1M534.1 46.7h.1M426.9 200.1h.1M384.2 4.9h.1M384.1 162.1h.1M358.9 237.3h.1M538.2 123.8h.1M456.8 176.4h.1M335.6 249.6h.1M538.8 138.4h.1M534 33.5h.1M388.3 162.2h.1M486.9 109.2h.1M375.7 79.8h.1M575.3 60.9h.1M559.9 58.6h.1M587.9 40.7h.1M330.5 104.9h.1M539 96.4h.1M583.1 82.3h.1M436 185.3h.1M596.1 237.3h.1M598.4 20.3h.1M487.5 243.1h.1M524.6 25.7h.1M503.2 259.4h.1M425 3.1h.1M423.5 57.7h.1M386.2 53.1h.1M388.5 67.7h.1M500.6 62.5h.1M385.1 260.8h.1M537.3 147.2h.1M437.2 1.6h.1M444.3 157.7h.1M364.1 240.1h.1M347.4 155.5h.1M334.7 243.2h.1M548.4 26.3h.1M528 25.6h.1M429.6 67h.1M500.3 117.5h.1M414.7 152.9h.1M562.6 74.6h.1M499.1 93.8h.1M430.3 76.5h.1M563.9 2.8h.1M543.9 177.1h.1M574.7 31.9h.1M406.4 109.7h.1M549.9 142h.1M337.1 192.6h.1M558.7 206.1h.1M545.5 10.7h.1M549.4 7.3h.1M335 103.4h.1M552.4 185.5h.1M589.5 190.4h.1M464.4 173.5h.1M540.3 233.8h.1M458.5 266.1h.1M589.4 202.1h.1M486.7 72.8h.1M448 101.4h.1M401.6 250.7h.1M559.8 222.2h.1M377.2 245.4h.1M530.1 115.2h.1M516.3 137.8h.1M433.5 194.8h.1M509.1 26.8h.1M466.6 76.7h.1M473.9 139.6h.1M396.9 172.8h.1M364.6 249.5h.1M448.4 157.8h.1M336.9 64.9h.1M493.5 36.4h.1M464 83h.1M443.7 137.6h.1M528.2 201.4h.1M418.2 84.5h.1M504.1 37.4h.1M491.4 239.7h.1M552.7 71.4h.1M336.4 180.9h.1M514.9 72.4h.1M565 131.1h.1M472.3 211.7h.1M431 3.4h.1M560.8 146.2h.1M331.8 246.5h.1M504.6 95.7h.1M449.3 34.3h.1M477.5 83.1h.1M536.7 93.9h.1M440.1 248.7h.1M442.6 242.1h.1M426.1 225.9h.1M567.3 247.3h.1M465.9 196.9h.1M378.1 192.3h.1M415.7 90.2h.1M428 112.9h.1M339.8 224.9h.1M340.1 132.4h.1M410.6 172.7h.1M556.6 119.1h.1M577.7 52.4h.1M480.8 186.3h.1M593.3 121.7h.1M330.3 143.5h.1M484.2 52.1h.1M595.5 149h.1M554.4 174.1h.1M544.9 171.3h.1M442.3 45.3h.1M403.2 63.5h.1M373.4 113.8h.1M339.4 214.4h.1M386.3 49.9h.1M517.2 45.4h.1M506.1 196.1h.1M546.8 7.5h.1M460.2 124.4h.1M358.2 35.8h.1M489.3 54.6h.1M508.6 169.3h.1M382.2 51.9h.1M598.4 136.5h.1M411 5.1h.1M398.1 36.1h.1M416.1 158.7h.1M435.6 136.1h.1M576.4 106.8h.1M389.1 176.8h.1M372.9 191.8h.1M395 1.1h.1M456.8 205.9h.1M400.5 36.5h.1M485 34.6h.1M517.9 36.3h.1M375.5 220.8h.1M362 52.6h.1M349.1 79.5h.1M387.7 151.3h.1M331.6 78.5h.1M520.9 253.6h.1M339.6 202.3h.1M518.6 153.1h.1M477.9 59h.1M374.2 104.8h.1M553.2 109.3h.1M486.2 145.2h.1M497.9 20.5h.1M501.5 147.7h.1M382.1 3.8h.1M420.3 163.9h.1M359.2 135.8h.1M559 85.1h.1M542 122.3h.1M526.6 125.6h.1M472.7 207.1h.1M402.5 213.7h.1M506.6 187.2h.1M491.7 42.6h.1M534.3 169.9h.1M564.8 233.6h.1M345.7 203.1h.1M443.7 197h.1M386.2 140.1h.1M391.1 206.2h.1M370 240h.1M481.1 161.4h.1M490.1 244.2h.1M389.6 119.5h.1M386.3 210.4h.1M401.3 139.8h.1M419.9 182.3h.1M537.9 34.6h.1M551.6 12.6h.1M546.3 269.3h.1M364.8 3.8h.1M587.3 76.1h.1M591 108.5h.1M456.6 154.5h.1M386.3 35.2h.1M428.7 267.7h.1M404.7 49.1h.1M464.6 1.3h.1M579.2 244.6h.1M333.5 99.4h.1M505.3 216.2h.1M580.5 4.3h.1M400 43.5h.1M455.6 38h.1M519.6 119.6h.1M580 161.6h.1M574.1 164.9h.1M384.2 152.4h.1M579.3 249.5h.1M412.8 33.5h.1M385.8 17.7h.1M581.1 216.4h.1M488.2 197.7h.1M584.6 239.3h.1M416.2 155.4h.1M434.3 57.5h.1M405.8 169.5h.1M580 192.4h.1M586.6 210.7h.1M373.9 77.5h.1M512.5 132.6h.1M357.5 140h.1M578.3 94h.1M422.8 81.6h.1M598.4 111.7h.1M546.4 257.5h.1M597.4 262.9h.1M330 212.9h.1M488 119.2h.1M390 155.1h.1M408.4 72h.1M536.1 77h.1M513.5 205h.1M444.7 109.9h.1M370.8 213.7h.1M345.9 191.6h.1M594.2 73.2h.1M439.7 121.2h.1M520.5 134.5h.1M390.8 236.2h.1M421 97.6h.1M441.2 166.8h.1M562.4 106.8h.1M458.8 139.6h.1M519.3 4.5h.1M521.3 162h.1M554.3 56.1h.1"/><path id="dg1" d="M451.1 152.7h.1M578.5 127.2h.1M378.9 139.7h.1M354.4 83.2h.1M353.5 220.4h.1M505.6 167.8h.1M371.5 5.1h.1M471.7 17.1h.1M469.2 174.5h.1M535.9 109.5h.1M329.1 57.8h.1M348.7 171.6h.1M352.5 91.1h.1M360.5 115h.1M411.1 240.8h.1M385.9 107.8h.1M559.7 174.9h.1M537.6 90.1h.1M353.3 158.9h.1M429.4 123.8h.1M574.3 222.6h.1M528.6 255.8h.1M567.2 164.6h.1M490 80.5h.1M483.5 36.7h.1M515.6 159.4h.1M366.9 10.5h.1M459.2 199h.1M349.3 149h.1M528 245h.1M528 191.7h.1M441.6 215.2h.1M497.7 104.6h.1M527.5 158.4h.1M337 163.9h.1M458.9 63.4h.1M398.1 4.1h.1M383.7 47h.1M448.3 242.7h.1M417.3 181.5h.1M521 258.5h.1M414.2 228.4h.1M451.8 7.7h.1M367 13.7h.1M331.9 129h.1M521.8 49.5h.1M402.5 94.7h.1M364.1 123.9h.1M386.6 244.9h.1M477.6 209.2h.1M501.5 142.7h.1M556.8 152.8h.1M557.2 245h.1M483.7 55.5h.1M473.7 137.4h.1M590.7 140.8h.1M481 134.1h.1M587.4 251.2h.1M401.7 129.2h.1M457.7 87h.1M380.7 168.4h.1M539.4 7.2h.1M424.9 169h.1M362.2 139.3h.1M396.6 54.6h.1M471.9 44.3h.1M384.2 172.1h.1M572.7 86.6h.1M378.8 56.3h.1M345.7 258.9h.1M468.1 117.6h.1M528.6 110.8h.1M519.3 234.3h.1M498.9 110.6h.1M594.3 219.1h.1M398.7 248h.1M549 110.9h.1M571.1 239.4h.1M331.9 97.4h.1M507.1 155.4h.1M472.9 106.6h.1M599 175.1h.1M495.2 201.2h.1M398.3 109.8h.1M342.6 54h.1M396.7 246.4h.1M590.1 154.9h.1M490.3 206.8h.1M341.2 253.1h.1M372.2 128.8h.1M584.2 115h.1M505.9 152.9h.1M408.9 4.8h.1M371.3 205.5h.1M524.1 127.9h.1M497.5 124.5h.1M448.6 182h.1M540.8 170.4h.1M396.2 266.5h.1M497.3 28.8h.1M477.7 172h.1M547.5 170h.1M443.6 70.9h.1M547.7 101h.1M505.5 269.1h.1M350.2 23.5h.1M514 82h.1M405.4 39.7h.1M577 255.7h.1M414.8 109.3h.1M427.7 99.5h.1M435.8 106h.1M367.8 203.1h.1M388.5 208.4h.1M590.4 183.2h.1M462.3 146.6h.1M576 112.3h.1M552.1 181.7h.1M470.4 193.4h.1M384.2 116.2h.1M345 84.6h.1M360 176.6h.1M489.6 61.7h.1M378.9 77.2h.1M413.2 149.6h.1M549.6 130.9h.1M476.8 260.4h.1M471.4 140.8h.1M371.5 43.5h.1M563.7 140.9h.1M401 145.9h.1M369.7 209.8h.1M522.5 27.3h.1M458.6 128h.1M587 160h.1M542.1 114h.1M475.7 143.5h.1M413.1 85.2h.1M332.3 103.2h.1M481.3 125.1h.1M331.8 269.7h.1M430.5 147.3h.1M409.5 92.4h.1M526.5 90.3h.1M367 26.6h.1M555 161.6h.1M467.1 176.4h.1M433.2 90.8h.1M421.4 177.3h.1M466.5 214.7h.1M551.8 166.7h.1M424.2 136.6h.1M522.2 227.4h.1M498.3 54.6h.1M351.5 67.3h.1M426.5 126.5h.1M362.5 264.8h.1M365.6 246h.1M362.1 224.5h.1M406.9 244.1h.1M337.6 49.8h.1M510.2 200.9h.1M546 5.4h.1M482.4 91h.1M502.3 11.3h.1M455.9 112.5h.1M533.7 204.7h.1M481.8 246.3h.1M471 143.3h.1M532 83.6h.1M489.2 19.9h.1M392.7 19.5h.1M508.7 235.8h.1M442.8 219.2h.1M355.6 215.7h.1M394.9 82.1h.1M487.1 13.4h.1M456.6 57h.1M408.7 251h.1M555.2 97h.1M342.5 29.8h.1M449.2 22.4h.1M389.3 84.2h.1M377.9 64.8h.1M567.8 160.9h.1M447.9 144.2h.1M396.7 218.7h.1M404.4 149.5h.1M426.1 179.4h.1M465.5 230.1h.1M585.9 48.1h.1M539.5 45.8h.1M447.9 210.5h.1M541.4 215.4h.1M463.7 10.6h.1M490.1 194.7h.1M446.4 120.7h.1M400 217.4h.1M542.7 65.5h.1M368.5 85.3h.1M372.1 188.2h.1M595.3 40.2h.1M339.6 66.2h.1M338.3 270.9h.1M535.1 199.9h.1M339.7 110.2h.1M435.1 229.5h.1M378.6 149.9h.1M561.9 56.4h.1M432.4 20.7h.1M403.1 6h.1M378.2 72.1h.1M426.5 42.6h.1M535.7 197.1h.1M416 105.2h.1M351.5 240.1h.1M469.2 15.9h.1M435.4 65.6h.1M519.8 71.6h.1M438.4 105.7h.1M407.9 94.5h.1M481.8 220.2h.1M510 250.1h.1M509 259.8h.1M417.6 135.7h.1M369.7 158.9h.1M518.4 150.9h.1M518 7.2h.1M335.4 95.1h.1M569.8 154.3h.1M498.4 169.2h.1M440 113.6h.1M329.3 148.4h.1M422.6 241.2h.1M589.3 224.4h.1M372.1 169.5h.1M461.5 153.8h.1M467.7 35.1h.1M346.1 19.6h.1M359.4 123.4h.1M537.5 131.3h.1M563.9 15.5h.1M544 107.3h.1M509.7 63.6h.1M378.9 4.7h.1M487.1 256h.1M514.6 114.6h.1M581 269h.1M342.1 194.3h.1M418.1 8.2h.1M593.9 106.5h.1M545 40.8h.1M581.1 69.1h.1M390.4 131.7h.1M350.2 50.5h.1M459.7 113.3h.1M546.9 108.3h.1M403.8 255.4h.1M524.7 48.7h.1M361.1 21.2h.1M425.9 205.2h.1M595.2 28.3h.1M519.4 68.9h.1M484.7 62.6h.1M506.4 220.7h.1M424.6 76.7h.1M529.2 58.3h.1M529.7 149h.1M358.3 268.6h.1M388.3 111.6h.1M519.6 49.2h.1M432.9 63.3h.1M491.2 156.2h.1M455.5 270.1h.1M528.3 85.8h.1M597.3 18.6h.1M348.9 151.4h.1M559.9 209.9h.1M427.8 28.2h.1M495.6 245.4h.1M445.3 5.2h.1M491.8 189.3h.1M516.3 127.4h.1M425.5 54.2h.1M597.6 188.4h.1M527.8 98.6h.1M412.8 111.6h.1M368.5 172.1h.1M439.4 124.8h.1M392.5 158h.1M408.1 189.3h.1M510.5 67.3h.1M440.1 36.8h.1M570.7 69.2h.1M442.6 93.6h.1M488.5 148.9h.1M430.1 197h.1M510.1 165.1h.1M437.3 178.8h.1M374 176.9h.1M397.4 220.8h.1M526.3 211.3h.1M361.3 128h.1M538.9 67.9h.1M387.8 123.4h.1M438.7 166.9h.1M562.2 262.2h.1M371.3 144.9h.1M336.7 30.9h.1M410.2 262.8h.1M350.2 71.7h.1M359.2 250h.1M505.6 241.3h.1M457.8 98.1h.1M342.4 227.5h.1M345.7 144.1h.1M476.8 109.3h.1M489.2 261.4h.1M427.7 163.1h.1M493.5 160.7h.1M468.4 205.3h.1M343.3 26.2h.1M485.6 2.5h.1M360.9 87.7h.1M508.9 149.5h.1M480.3 250.9h.1M511.1 252.5h.1M462.3 187.9h.1M357.4 202.2h.1M383.6 94.8h.1M373.2 95.8h.1M593.8 89.9h.1M484.2 70.7h.1M480.1 265.4h.1M338.5 190.3h.1M493.7 33.7h.1M525.3 72.7h.1M474 69.7h.1M364.5 132.4h.1M402.6 78.2h.1M403.9 139h.1M493.5 148.4h.1M426.9 214.4h.1M583.8 138h.1M481.8 95.5h.1M358.8 255.9h.1M572.5 28.6h.1M508.9 19.4h.1M337 155.7h.1M463.7 54.5h.1M591.6 153.2h.1M419.6 191.3h.1M488.5 186.8h.1M494.4 167.2h.1M581 24.4h.1M335.5 9.7h.1M533.5 219.9h.1M392.3 240h.1M397.4 130.8h.1M399.3 142.7h.1M397.8 238.7h.1M429.1 97.6h.1M431.5 78.8h.1M457.5 222.8h.1M588.3 253.4h.1M421.3 253.2h.1M365.6 184.8h.1M482.5 80.8h.1M453.1 164.4h.1M557.4 127h.1M343 45.1h.1M386.1 6.3h.1M388.3 217.6h.1M456.7 170.1h.1M414.6 97.6h.1M567.6 158.4h.1M453.3 91.1h.1M567.1 45.1h.1M466.4 267.8h.1M486.6 43.7h.1M422.7 152.6h.1M329.4 135.6h.1M401.7 156.6h.1M353.3 135.8h.1M590.9 76.9h.1M478.9 257.3h.1M407.5 229h.1M464.8 93.8h.1M514 217.1h.1M521.1 220.4h.1M394.9 250.2h.1M533.7 267.9h.1M563.3 209.3h.1M541 237.7h.1M432.8 96.8h.1M335.2 44.6h.1M505.5 211.1h.1M338.6 234.7h.1M473.6 129.2h.1M382.8 158.4h.1M347.9 15.1h.1M424.9 143.8h.1M392.6 129.4h.1M445.9 186.8h.1M502.1 255.3h.1M535.8 16.4h.1M363.5 116.3h.1M348.7 107h.1M460.4 160.3h.1M497.4 112.4h.1M411 210.4h.1M437.4 182.9h.1M524.5 258.4h.1M474.6 266.6h.1M436.6 270.3h.1M382.1 248.4h.1M550.7 227.9h.1M521.3 207.4h.1M530.6 157.9h.1M396.9 192.1h.1M539.8 89h.1M403.1 154.7h.1M570.2 180.7h.1M472.1 269.6h.1M482.8 259.4h.1M402.9 98.1h.1M400.4 133.5h.1M517.8 92.3h.1M448.3 221.1h.1M482.9 166.1h.1M595.5 61.5h.1M389.1 168.9h.1M445.4 225.3h.1M519.7 59.6h.1M567.3 237.4h.1M390.2 99.7h.1M354.7 13h.1M424.3 267.9h.1M345.9 28.6h.1M334.6 189.9h.1M396.2 80.2h.1M467.2 85.5h.1M389.5 7h.1M544 169.1h.1M530 124.2h.1M349.1 67.9h.1M597.2 4.6h.1M501.7 31h.1M446.6 207.6h.1M488.8 158.8h.1M375.8 126.7h.1M572.1 183.7h.1M475.8 92.3h.1M485 172.2h.1M500.9 72.1h.1M462.7 263.4h.1M393.8 76.6h.1M393 79.6h.1M432.7 144.9h.1M342.2 8.6h.1M594.4 101.6h.1M463.9 208.5h.1M342.9 224.7h.1M368.9 45h.1M339.1 8.7h.1M352.4 13.6h.1M359.4 78.7h.1M374.4 46.7h.1M473.6 102.8h.1M369.4 155h.1M582.8 36.8h.1M517.9 251.6h.1M379.1 107.6h.1M426.8 165.1h.1M598.7 228.4h.1M522.3 64h.1M459 196.8h.1M442.7 87.1h.1M529.2 126.5h.1M383.8 168.1h.1M511.1 263.3h.1M486.2 234.9h.1M406.5 210.9h.1M344.9 36.6h.1M407.3 124.5h.1M369.3 115.7h.1M568.2 131.9h.1M346.4 184h.1M367.9 212.4h.1M491.9 128.5h.1M410.3 249.5h.1M415.5 197.2h.1M454.2 33h.1M592.1 165.1h.1M536.9 165.9h.1M427.9 176.4h.1M424.2 96.4h.1M557.6 217.7h.1M433.2 175.2h.1M431.1 32.7h.1M367.4 174h.1M424.3 129.3h.1M525.9 9.2h.1M501.5 218.5h.1M417.1 52.9h.1M542.9 164.4h.1M363 219.9h.1M596.8 157.6h.1M533.6 176h.1M509.7 43.8h.1M542 224.6h.1M587.9 84.9h.1M481.4 76.7h.1M536.6 161.1h.1M469.5 56.1h.1M511.4 29.9h.1M329.8 268.5h.1M391.4 244.9h.1M523.4 211.3h.1M447 124.8h.1M426 9.8h.1M337.2 86.8h.1M391.3 197.2h.1M380 86.5h.1M596.7 55.4h.1M546.3 33.9h.1M550.3 20.3h.1M437 154.1h.1M360 9h.1M566.3 98.6h.1M560.7 15.1h.1M532 168h.1M342.4 129.7h.1M430.4 258h.1M368 205.3h.1M461.1 200.3h.1M527 239.2h.1M420.3 29.3h.1M439.8 129.1h.1M582.9 253.4h.1M453.1 175.3h.1M334.2 25.6h.1M385.5 199.1h.1M470.8 180.5h.1M386.1 62.3h.1M526.6 227.5h.1M345.6 199h.1M460.7 243.2h.1M511.4 181.2h.1M358.3 2h.1M390.2 61h.1M508.3 15.6h.1M548.4 269.3h.1M562 166.9h.1M427.1 2.3h.1M423.8 269.9h.1M435.6 75.5h.1M410.4 243.7h.1M407.7 133.4h.1M473.4 18.7h.1M518.2 162.2h.1M596.1 211.1h.1M497.6 164.9h.1M365.3 263.4h.1M399.1 60.1h.1M410.7 165.5h.1M569 250.7h.1M522.6 143.9h.1M329.3 215.9h.1M423.4 210h.1M428 52.6h.1M329.4 262.1h.1M488 17.9h.1M494.3 169.6h.1M587 81.2h.1M368.7 8.7h.1M576.2 251.2h.1M394.9 107.6h.1M478.6 146.4h.1M361.6 254.4h.1M558.3 239.8h.1M374.9 197.8h.1M513.1 220.1h.1M554.4 225.7h.1M595.3 79.5h.1M402.3 168.1h.1M586.2 138.1h.1M549.8 201.4h.1M439.1 40.3h.1M372.1 75.9h.1M555.7 159.5h.1M399.1 13.6h.1M333.1 157.2h.1M395.5 167.5h.1M398.7 236.6h.1M356 211.5h.1M482.8 68h.1M512.1 152.1h.1M568.4 257.6h.1M469 124h.1M497.7 131.2h.1M454.3 187.6h.1M487.1 265.1h.1M379 259.5h.1M432.8 24.6h.1M500.2 149.6h.1M519 117h.1M359.8 147.1h.1M416.3 259.7h.1M490.7 74.5h.1M476.8 236.1h.1M372 63.8h.1M496.4 129.3h.1M543.8 219h.1M393 265.7h.1M476.9 152.9h.1M585.5 202.3h.1M559.8 161.1h.1M393.8 101.9h.1M458.5 30.8h.1M487.6 25.8h.1M598 124.4h.1M351.7 148h.1M378.8 153.1h.1M446 222h.1M467.2 40.9h.1M526.7 69.7h.1M437.9 68.2h.1M357.4 134.4h.1M585 131.1h.1M499 33.1h.1M508 13.3h.1M536 19.3h.1M391.9 212h.1M492 143.3h.1M517.1 241h.1M415.1 86h.1M542.6 76.7h.1M407.1 181.6h.1M367.1 70.5h.1M442.3 254.9h.1M456 127.3h.1M437.7 245.5h.1M422.9 230h.1M433.1 103.6h.1M556.1 248.6h.1M580.2 113h.1M497 3h.1M532.6 21.2h.1M450.2 74.6h.1M423.1 66.8h.1M342.6 49h.1M406.5 32h.1M533.6 44.2h.1M461.5 81.5h.1M470.3 102.4h.1M474.7 42.9h.1M476 199.6h.1M375.4 175h.1M458.4 78.6h.1M385.2 133.7h.1M457.6 270.5h.1M455.6 74.6h.1M479.3 199.5h.1M507.1 252.9h.1M495.1 133.9h.1M401.1 51.5h.1M376.3 217.2h.1M587.4 10.6h.1M372.4 199.9h.1M591 247.2h.1M553.5 206.8h.1M479.7 197.2h.1M509 119.8h.1M478.1 87.9h.1M343.9 214.4h.1M532.5 227.6h.1M450.8 14.7h.1M470.2 83.5h.1M389.2 43.2h.1M459.5 100.4h.1M398.8 203.1h.1M472.3 248.2h.1M376.8 26.6h.1M577.8 219.6h.1M593.6 104h.1M590.5 22.8h.1M583.4 249.2h.1M540.3 172.9h.1M367.6 23.1h.1M586.6 14.2h.1M356.9 251.1h.1M423.5 39.1h.1M424.3 253.6h.1M474.3 58.7h.1M518.7 15.2h.1M379.4 49.3h.1M476.7 174.4h.1M367.6 60.4h.1M563.5 219.5h.1M478.3 64.3h.1M589.8 170.1h.1M347.1 67h.1M578.5 241.1h.1M528.9 96.2h.1M375.8 114.6h.1M397 135.8h.1M574.4 197.7h.1M515.5 250h.1M380.3 136.8h.1M515.2 264.8h.1M353.8 168h.1M550 251.4h.1M587.2 197.6h.1M593.7 98.8h.1M421.6 134.3h.1M582.9 17.6h.1M353.5 86.2h.1M500.2 250.1h.1M427.5 230.5h.1M575.9 260h.1M366.1 119.6h.1M344.4 210.3h.1M522.4 32.8h.1M456.3 158.6h.1M398 111.9h.1M451.6 69.5h.1M466.3 227h.1M419.9 117.2h.1M359.4 120.1h.1M597.5 194.6h.1M460.3 234.8h.1M598.6 222.4h.1M494.4 11.3h.1M435.5 232h.1M458.4 17.7h.1M400 210.4h.1M479.3 202.8h.1M476.1 47.9h.1M549 240.4h.1M539.8 194.2h.1M381.5 111.6h.1M407.9 136.1h.1M592.4 199.8h.1M439 133.6h.1M439.9 246.6h.1M344 63.7h.1M543.4 86.4h.1M525.9 97.2h.1M339 147.1h.1M391.7 28.7h.1M567.1 210.1h.1M558.1 73.8h.1M391.3 172.2h.1M544.7 80.4h.1M598.8 160.9h.1M517 132.1h.1M352.7 32.7h.1M557 87.1h.1M534.8 214.2h.1M483.4 7.9h.1M582 118h.1M512.4 232.3h.1M553.6 43.6h.1M555.6 134.8h.1M535.9 179.7h.1M348 128.3h.1M437.6 141.8h.1M381.2 38.4h.1M428.6 202.9h.1M513.9 171.7h.1M450.5 262.4h.1M464.8 35.3h.1M377.3 185.2h.1M462.3 112.1h.1M512 161.6h.1M396.5 158.9h.1M495.8 138.5h.1M359.5 198.9h.1M484.2 176.6h.1M493.9 139.5h.1M478.6 267h.1M511.8 98.6h.1M504 46.3h.1M434.5 117h.1M566.8 18.7h.1M422.6 49.6h.1M552.4 128.4h.1M461.6 128h.1M395.2 254.6h.1M357.6 190h.1M432.1 83.6h.1M484.7 156.4h.1M410.7 149.2h.1M508.9 102.4h.1M560.8 206.9h.1M440.6 193h.1M571.9 229.8h.1M569.9 64.7h.1M399.5 81h.1M413.3 5.7h.1M483.2 145.4h.1M386.1 153.7h.1M583.6 5.1h.1M519.2 239.1h.1M346.6 6.1h.1M410.1 266.3h.1M452.5 74.2h.1M354.6 246.3h.1M477.4 80h.1M590.6 158.1h.1M506.7 71.9h.1M332.6 108.2h.1M568.6 195.6h.1M329.6 255.2h.1M400.3 177.3h.1M542.2 100h.1M585.7 266.7h.1M513.7 36.4h.1M508 128h.1M456.8 60.2h.1M492.1 203.4h.1M505.8 117.7h.1M540.7 80.1h.1M339.5 59.1h.1M333.5 116h.1M431.4 240h.1M340.5 267.9h.1M512.4 196h.1M597.2 69.6h.1M397 116h.1M548.5 145.8h.1M598.4 25.9h.1M439.2 201.7h.1M517.7 156.4h.1M406.7 43.2h.1M575.8 44.6h.1M497.7 62h.1M377.2 255.3h.1M338.9 179.3h.1M446.9 13.9h.1M415.5 56.9h.1M413.6 80.1h.1M527.8 117.4h.1M379.8 173.4h.1M360.3 247.5h.1M347.6 36.8h.1M585.9 151.3h.1M376.8 202.8h.1M580.9 171.3h.1M588.1 221.8h.1M520.9 240.7h.1M465.6 17.3h.1M339.3 24.1h.1M363.6 48.7h.1M458.5 213.6h.1M500.8 193.7h.1M569.4 265.7h.1M381.4 54.6h.1M365.2 74.8h.1M543.3 104.3h.1M395.1 211.9h.1M359.8 158.8h.1M335.2 18.3h.1M385.8 185.9h.1M373.2 98.4h.1M481.7 178.3h.1M404.3 21.5h.1M597 150.8h.1M517.3 67.6h.1M359 56.7h.1M421.2 263.2h.1M424.2 63.2h.1M409.5 74.3h.1M558 263.6h.1M477.7 19.8h.1M333.7 79h.1M554.5 129.9h.1M516.5 268.4h.1M360.2 182.1h.1M511.3 9h.1M503.1 265.6h.1M340.6 162.2h.1M423.2 73.9h.1M453.8 136.6h.1M414.1 213.5h.1M393.7 181.6h.1M346 188.8h.1M488.4 258.6h.1M380.7 213.2h.1M462.8 100.7h.1M566.1 73.3h.1M575.6 99.2h.1M331.3 152.5h.1M369.8 65.7h.1M518.5 19.1h.1M525.9 133.8h.1M433.6 32.3h.1M575 237.5h.1M570.2 121.6h.1M345.7 221.2h.1M456.6 257.4h.1M414.7 181h.1M496.5 223.4h.1M332.1 255.6h.1M392 219.3h.1M459.1 153.9h.1M506.1 202.2h.1M464.4 150h.1M504.6 7.3h.1M418 141.3h.1M469.6 78.7h.1M568.3 187h.1M526.1 149.2h.1M457.1 120.3h.1M491.5 92.5h.1M446.4 140.6h.1M549.1 193.1h.1M544.1 271.8h.1M492.4 121.5h.1M516.2 16.1h.1M571.9 175.8h.1M508.8 265.6h.1M421.4 247.1h.1M431 70.9h.1M479.3 21.6h.1M445.4 200.4h.1M571.3 125.1h.1M388.2 56.1h.1M510.7 203.3h.1M543.7 237h.1M546.6 47.9h.1M342.3 184h.1M555 9.3h.1M462.6 162.4h.1M592.3 252.2h.1M545.2 30.8h.1M563.8 265.5h.1M462.5 123.1h.1M436 42.3h.1M346.4 251.6h.1M379.1 269.7h.1M423.2 7.5h.1M590.9 94.3h.1M428.2 18.3h.1M333.2 31.7h.1M467.4 179.8h.1M439.1 204.7h.1M492.9 70.1h.1M485.3 193.5h.1M568.3 9.2h.1M475.9 77.1h.1M592.2 127.4h.1M595.9 178.2h.1M493.4 85.3h.1M563.8 29.5h.1M541.7 58.1h.1M448.5 25.6h.1M574.1 75h.1M561.1 119.1h.1M330 82.8h.1M529 60.9h.1M432.6 126.7h.1M352.3 230.8h.1M340.3 96.8h.1M590 233.1h.1M511.7 158.4h.1M378.3 102.8h.1M566.4 242.6h.1M449.7 91.9h.1M434.8 60.9h.1M557.5 112.5h.1M582.1 134.9h.1M415.1 234.7h.1M446.5 184.1h.1M408.1 163.2h.1M388 261.8h.1M449.8 224h.1M587.1 17h.1M399.7 38.5h.1M478.5 45.8h.1M574.3 89.7h.1M533.7 113.3h.1M381.3 101.7h.1M555.3 67.7h.1M374.7 1.8h.1M440.3 158.7h.1M360.9 90h.1M464.2 182.9h.1M482.1 212h.1M413.4 191.2h.1M423.3 257.2h.1M462.5 91.6h.1M539.7 83h.1M432.5 261.2h.1M477.1 166.5h.1M444.7 41.7h.1M469.1 266.3h.1M460.1 193.4h.1M530.5 49.3h.1M416.1 215.3h.1M517.5 41h.1M458.2 47.1h.1M505.2 132h.1M356.9 183h.1M572.8 186.9h.1M471.7 68.5h.1M525.4 179.4h.1M514.9 169h.1M529.9 121.9h.1M477.1 225.6h.1M481.1 141.3h.1M446.7 218.7h.1M334.6 49.4h.1M426.1 115h.1M346.5 114.8h.1M585.5 100.9h.1M560.5 225.6h.1M384.9 64.4h.1M531.3 155.7h.1M356.9 233.1h.1M355.5 170.8h.1M504.4 193.1h.1M358.5 204.4h.1M380.9 41.4h.1M350.5 258h.1M529.8 186.7h.1M574.5 218.2h.1M356.6 176.9h.1M439.3 140.5h.1M359 143.9h.1M490.5 1.7h.1M532 116.5h.1M433.4 69.8h.1M371.9 117.5h.1M539.7 115h.1M548.4 126.1h.1M462.3 214.5h.1M500.7 15.8h.1M383.2 194.9h.1M342.4 40.2h.1M579.2 59.6h.1M504.2 254.2h.1M536 124.5h.1M442.3 128.3h.1M381.2 57.3h.1M550.1 31.9h.1M467.6 223.4h.1M501.1 111.4h.1M369.2 28.8h.1M357.3 223.4h.1M422.5 100.8h.1M576.3 114.4h.1M386.8 250.7h.1M545.7 68.8h.1M564.4 269.1h.1M561.5 142.6h.1M556.4 207.8h.1M508.9 70.7h.1M510.7 118.2h.1M584.8 268.7h.1M350.8 252h.1M448.2 188.4h.1"/><path id="dg2" d="M466.1 160.2h.1M516.2 12.3h.1M594.2 262.4h.1M380.4 66.6h.1M337.1 126.7h.1M447.9 229.3h.1M452.5 76.4h.1M555.9 192.8h.1M414.1 63.2h.1M407 20h.1M557.6 105.7h.1M356.3 17.2h.1M544.2 49.2h.1M480 122.3h.1M380.5 199.3h.1M386.5 74.1h.1M386.6 71h.1M409 20.9h.1M394.6 163.9h.1M588 132.1h.1M378.4 42.8h.1M396.4 52.4h.1M339.4 261.9h.1M376.4 196.2h.1M347.6 62.9h.1M480 232h.1M576.7 56.3h.1M333.5 74h.1M449.3 17.4h.1M593.7 179h.1M518.3 261.9h.1M415.1 271.8h.1M424 186.7h.1M572.2 237.1h.1M350.7 174.3h.1M597.2 239.4h.1M525.6 106.3h.1M351.6 204.3h.1M517.6 135.8h.1M494.9 250.4h.1M382.6 117.8h.1M546.6 248.8h.1M566.7 105.2h.1M486.4 86.8h.1M365.8 135.5h.1M555 231h.1M386.8 113.2h.1M497.9 134.8h.1M594.1 123.6h.1M349.2 9.5h.1M564.7 12.2h.1M412.4 215.5h.1M334.2 37.8h.1M553 65.3h.1M498.9 122h.1M499.1 178.5h.1M547 260.7h.1M517.3 142h.1M494.9 205.9h.1M580.8 196.8h.1M430.7 155.1h.1M504.9 56.5h.1M523.9 222.8h.1M593.7 265.9h.1M474 215.3h.1M415.5 247.6h.1M560.1 95.4h.1M351.3 120.5h.1M460.6 8.7h.1M547.5 18.4h.1M419.5 214.5h.1M366.9 41.3h.1M468.5 197.1h.1M555.8 187.8h.1M584.4 134.5h.1M585.3 24.3h.1M388.8 143.7h.1M385.2 231.6h.1M590.5 143.1h.1M437.2 218.1h.1M515.6 18.9h.1M474.5 113.1h.1M363.3 118.5h.1M381.4 62.6h.1M514.5 88.3h.1M472.2 119.4h.1M430.4 113h.1M558.8 166.8h.1M560.3 64.1h.1M529 220.6h.1M414 251.1h.1M568.6 37.3h.1M393.6 197.9h.1M542.3 35.1h.1M437.8 186.7h.1M513.2 248h.1M590.5 32.3h.1M465.5 206.5h.1M464.8 186.8h.1M380 20.1h.1M482.6 40.7h.1M555.9 269.4h.1M579.3 26.8h.1M453.8 208.2h.1M518.3 229.8h.1M467.4 5.2h.1M570.2 218.3h.1M490.9 137.7h.1M516.6 208.9h.1M518.3 207.4h.1M430.4 27.7h.1M547.6 21.6h.1M374.7 135.3h.1M494 16.9h.1M427.7 78.4h.1M395.2 12.6h.1M434.3 244.2h.1M531.1 14.6h.1M596 256.9h.1M348.8 246.4h.1M445 130.4h.1M470.3 255h.1M593.3 222.3h.1M492 32.2h.1M384 15.1h.1M452 72h.1M486.2 114.7h.1M527.3 65.6h.1M359.7 242.9h.1M426 74.6h.1M488.8 172.6h.1M576.2 239.1h.1M402.2 116.2h.1M475.2 20.6h.1M352.3 184.3h.1M429.8 130.7h.1M385.9 94.1h.1M530.1 228.2h.1M416.9 149.7h.1M530.4 250.5h.1M444.5 101.1h.1M538.4 21.6h.1M386.6 180.4h.1M524.7 189.1h.1M427.9 32.8h.1M575.6 119.7h.1M545.8 83.6h.1M581.4 243.5h.1M396 99h.1M381.6 153.8h.1M544.2 147.5h.1M376.7 206.7h.1M566.8 77.3h.1M475.9 154.8h.1M589.9 177.5h.1M476.6 214.6h.1M469.8 208.2h.1M559.4 219.4h.1M554.1 241.8h.1M545.6 115.3h.1M529.1 269.6h.1M430.4 46.4h.1M538.5 49.6h.1M338.8 30.5h.1M392.6 195.4h.1M399.3 241.5h.1M575.8 93.7h.1M459.3 60.9h.1M342.4 257.8h.1M506.5 65.4h.1M429.3 216.9h.1M415.9 71.3h.1M329.4 223.6h.1M557.5 223.8h.1M552.1 57.5h.1M371.5 226.5h.1M357.6 107.8h.1M453.7 263h.1M553 178.2h.1M520.7 65.4h.1M495.3 79.7h.1M524.4 90.9h.1M371.4 34.6h.1M438.8 20.7h.1M577.6 116.7h.1M536.1 223.5h.1M440.3 5.2h.1M437.2 190.7h.1M507.3 165.9h.1M334 90.7h.1M371.8 208.7h.1M572.8 149.6h.1M367.3 194.3h.1M595.4 140.8h.1M484.7 189.9h.1M417.9 252.8h.1M480.3 72.6h.1M549.7 164h.1M394 156.4h.1M506.8 84.4h.1M432 161.4h.1M382.9 127.8h.1M367.6 105.7h.1M510.2 40.2h.1M588 163.6h.1M460.2 270.5h.1M445.7 246.1h.1M362.6 122.1h.1M343 189.3h.1M471.1 65.8h.1M388.9 203.3h.1M362.4 146.7h.1M416.7 18h.1M337.4 244.5h.1M412.1 136.1h.1M581.2 265.8h.1M571.1 54h.1M525 85.8h.1M521.5 37.6h.1M516.9 255.1h.1M508.4 215.2h.1M579.2 181.8h.1M403.7 174.4h.1M353.3 267.4h.1M472.3 13.3h.1M533 67.6h.1M379.3 244.1h.1M432.9 252.8h.1M464 49.8h.1M479.1 175.8h.1M540.4 141h.1M513.8 142.1h.1M493.2 64.8h.1M388.7 158.2h.1M340.4 86.2h.1M400.5 160.5h.1M352.9 223.4h.1M553.3 214.2h.1M427.4 59.6h.1M591 12.4h.1M451.9 202.9h.1M569.3 39.4h.1M435.1 81.8h.1M391.1 69.6h.1M453.6 253.7h.1M593.9 166.6h.1M504.4 16.9h.1M421.7 189.3h.1M562.4 161.1h.1M568.3 126.4h.1M431.9 212.7h.1M373.2 56.2h.1M386.9 127.7h.1M412.3 122.2h.1M515.7 99.3h.1M435.1 251.3h.1M522.1 73.8h.1M581.9 98.5h.1M416.8 209.9h.1M340 41.9h.1M489.8 9.6h.1M475.9 37.9h.1M368.7 56.5h.1M562.8 62.3h.1M592.4 81.8h.1M387.4 187.8h.1M563.5 64.6h.1M444.5 107.4h.1M404.5 44h.1M393.7 26.2h.1M421.3 115.4h.1M434.7 99.7h.1M343.7 135.3h.1M495.1 259.7h.1M426.9 157.1h.1M583.4 210.1h.1M403.6 225.8h.1M574.6 11.3h.1M365.7 138.4h.1M512.6 64.6h.1M462.3 177.2h.1M590.6 91.4h.1M531.2 145.7h.1M372.9 235.8h.1M419.1 206.8h.1M482.2 115h.1M519.9 169.8h.1M553.4 218.1h.1M362.8 103.2h.1M591 37.2h.1M499.5 108.5h.1M361 12.5h.1M597.3 33.6h.1M545.1 228.3h.1M495.8 208.4h.1M516.4 149h.1M376.3 30h.1M460.8 33.6h.1M497.8 75.3h.1M427.8 71.3h.1M342.8 18.4h.1M570 84.8h.1M383.6 236h.1M344.6 150.2h.1M412.7 140.4h.1M331.8 57.9h.1M588 4h.1M471.4 220.5h.1M542.9 200.3h.1M552.5 209h.1M585.6 110h.1M427.5 173.9h.1M357.6 39.7h.1M437.9 88.1h.1M474 259.1h.1M402.8 184.5h.1M378.5 97.8h.1M502.8 58.5h.1M560.2 171.4h.1M465.3 154.9h.1M515.3 123.8h.1M508.7 114.6h.1M544.4 139.6h.1M451.6 146.3h.1M394.3 217.8h.1M477.3 246.4h.1M338.9 94.7h.1M562.5 227h.1M360.7 50.2h.1M348.4 268.7h.1M382.2 182.1h.1M377.8 35.7h.1M583.1 166.3h.1M443.7 223.3h.1M465.8 256.2h.1M422.5 191.7h.1M405.9 237.5h.1M406.4 232.6h.1M529.7 163.9h.1M448 259.7h.1M355.8 244h.1M352.9 99.5h.1M571.4 258.4h.1M518.3 271.4h.1M387.9 269.2h.1M367.6 107.9h.1M529.3 23.6h.1M333.3 234h.1M584 243.8h.1M473.7 145.6h.1M359 214.9h.1M410.4 138.5h.1M362.6 154.9h.1M558.7 29.3h.1M558.5 43h.1M370.5 222.8h.1M527.3 194.1h.1M502.6 230.7h.1M417.8 133.5h.1M464.3 245.9h.1M528.6 71h.1M428.3 117.3h.1M331.4 111.2h.1M428.6 82.6h.1M397 74.2h.1M561.2 110h.1M406.2 185.3h.1M414.7 223h.1M541.8 175.1h.1M341.9 170.3h.1M478.1 252.3h.1M501.4 7.1h.1M581.3 205h.1M528 114.4h.1M512.5 267.6h.1M576.5 21.3h.1M540 120.4h.1M531.9 103.4h.1M449.9 119.4h.1M527.4 20.4h.1M412.7 259.5h.1M473.8 228.4h.1M362.3 237.8h.1M456.5 9.5h.1M445.6 103.3h.1M374 159.8h.1M488.7 141.9h.1M486.6 131.2h.1M517.3 64.3h.1M399.5 198.9h.1M346.3 224.5h.1M445.8 168.4h.1M585.8 195.7h.1M396.3 6.5h.1M408.1 69.5h.1M561.1 232.6h.1M507.2 250.1h.1M506.4 20.5h.1M481.7 33.4h.1M596 84.8h.1M564.5 17.6h.1M594.4 186.7h.1M559.9 213.7h.1M471.3 51h.1M471.2 97h.1M460.2 22.3h.1M365.4 82.4h.1M469.2 261h.1M563.6 260.4h.1M553 187.6h.1M469.3 158.2h.1M329.2 19.4h.1M543.4 265.3h.1M554 111.5h.1M419.6 95h.1M333 209.7h.1M393.3 178.3h.1M410.4 90.3h.1M525.1 183.7h.1M350.2 207.9h.1M433.5 37.7h.1M542.2 213h.1M575.9 39.9h.1M584.3 53.2h.1M411.9 50.5h.1M362.2 143.8h.1M534.8 143.7h.1M389.2 21.8h.1M412.5 207.1h.1M375.7 200.6h.1M454.6 50.5h.1M333.1 83.5h.1M340.2 71.6h.1M496.1 101.1h.1M441.6 147.4h.1M575.7 64.2h.1M355.2 187.3h.1M467.8 103.7h.1M499.6 126.3h.1M465.1 116.5h.1M382.1 59.3h.1M421.7 215.6h.1M493.8 247.9h.1M580.8 175.6h.1M564.3 85.2h.1M497.2 35h.1M525.2 16.9h.1M501.6 134.3h.1M414.3 74.9h.1M379.6 176.6h.1M575.1 79.7h.1M586.1 168.8h.1M588.9 210.8h.1M419 76.7h.1M470.1 133.2h.1M530 68.7h.1M394.2 89.8h.1M585.2 174.3h.1M440.9 111.2h.1M475.1 271.3h.1M369.6 150.4h.1M402.6 196h.1M519.6 124.7h.1M445.8 29.9h.1M348.2 74h.1M516.5 119.6h.1M483.8 202.7h.1M513 167.8h.1M456.9 5.6h.1M361.4 83.4h.1M466.4 112.2h.1M436.7 241.4h.1M398.5 215.4h.1M520.2 122.5h.1M427.8 119.4h.1M566.5 124.2h.1M430.5 244.4h.1M506.1 182.2h.1M446.5 178.1h.1M333.5 113.8h.1M535.9 71.3h.1M345.1 159h.1M434.6 161h.1M374.1 170.5h.1M407.1 219.4h.1M492.6 125.8h.1M552.7 104h.1M564.6 254h.1M360.8 24.2h.1M550.1 233.9h.1M386.1 191.6h.1M566.2 60.2h.1M369.6 262.3h.1M421.1 120.3h.1M576.1 184.5h.1M375.3 97.3h.1M475.7 159h.1M491 234.7h.1M376.6 74.9h.1M509.1 189.5h.1M407 153.1h.1M568.5 205.3h.1M497.1 179.7h.1M465.1 128h.1M406.1 52.8h.1M513.6 188.5h.1M436.3 150.8h.1M591.2 148.3h.1M333.8 60.6h.1M506.3 59.1h.1M419.1 260.6h.1M479.9 28.5h.1M338.2 217.2h.1M481.1 104.8h.1M593.5 182.5h.1M522.7 134.7h.1M489 248.9h.1M377.7 136.6h.1M481.6 65.7h.1M338 52.4h.1M380.6 31.4h.1M383.1 174.5h.1M457.1 11.8h.1M495.1 53.4h.1M434.9 147.8h.1M432.5 192.9h.1M429.5 192.5h.1M405.8 80.4h.1M359.4 266.5h.1M528.9 235.7h.1M484.8 242.2h.1M506.1 261.3h.1M367.8 110.4h.1M481.3 36.7h.1M539.8 17.8h.1M416.2 165.5h.1M380.7 122.3h.1M399.9 100.1h.1M516.3 52.4h.1M329.3 1.3h.1M514.1 42.2h.1M372.8 10.6h.1M440.8 50.7h.1M372.6 18.3h.1M491.9 224.4h.1M422 33.6h.1M466.6 139.3h.1M492.9 185.8h.1M459.7 108.9h.1M598.9 13.6h.1M449 81h.1M386.6 4.1h.1M364.7 37.9h.1M492.4 14.8h.1M505 128.4h.1M385.3 175.3h.1M348.8 251.3h.1M366.8 149.1h.1M396.2 150.6h.1M517 198.2h.1M354.8 46.9h.1M565.6 263.8h.1M438.8 176.7h.1M511.6 229.6h.1M396.8 86.5h.1M397.7 206.7h.1M390 238.9h.1M439.8 43.4h.1M456.7 211.8h.1M468.2 194.3h.1M354.1 240.6h.1M366.1 54.5h.1M472.9 158.6h.1M592.8 49.3h.1M533.1 222.7h.1M361.5 45.6h.1M363.4 96.5h.1M451.9 186.7h.1M341.2 105.9h.1M350.5 116.4h.1M583.4 228h.1M366 161h.1M555.6 104.4h.1M542.5 23.6h.1M491.3 260.9h.1M582.3 47.4h.1M384 244.3h.1M408 114.5h.1M583.5 162.3h.1M420.9 62.6h.1M511.1 92h.1M461.7 103.4h.1M335.5 28.5h.1M470.8 223h.1M330.9 61.9h.1M338 131h.1M568 254.3h.1M358.6 91.4h.1M574 225.6h.1M390.7 67.2h.1M492.7 95.7h.1M530.6 209h.1M466.5 74.5h.1M416.6 174.2h.1M588.3 258.5h.1M578.8 229h.1M482 21.1h.1M596.5 122.1h.1M545.7 126.3h.1M384.4 123.3h.1M512.8 149.6h.1M441.2 189.4h.1M334.6 236.1h.1M494.7 97h.1M420.6 20.3h.1M494.9 174h.1M595 161.8h.1M571.2 108.5h.1M549.2 209.7h.1M563 201.8h.1M371.6 154.7h.1M349.4 27.9h.1M585.2 35.4h.1M345.4 241.3h.1M550 135.5h.1M449.5 8.6h.1M471 251.8h.1M471 75.7h.1M462.3 114.8h.1M514.5 226.8h.1M525.3 67.3h.1M475.1 14.9h.1M424.5 23.3h.1M506.7 27.1h.1M543 2h.1M516.5 61.6h.1M382.7 131.6h.1M353.2 189h.1M330.1 35.3h.1M351.6 218.8h.1M489.3 175.4h.1M545.2 225h.1M460.9 248.2h.1M546.6 59.5h.1M535.4 129.3h.1M445.4 235.8h.1M350.6 114.1h.1M559.4 125h.1M542 155.4h.1M445.5 229.8h.1M479.9 111.9h.1M336.7 219.8h.1M575.2 203.5h.1M404.6 165.4h.1M407.2 206.8h.1M512.2 242.7h.1M497.1 158.8h.1M523.5 62h.1M492.6 150.9h.1M408.2 156.7h.1M377.1 214.9h.1M502.5 163.7h.1M536.4 79.2h.1M594.2 135.3h.1M597.8 169.4h.1M333.7 161.2h.1M523 167.9h.1M509.1 152.8h.1M425.7 45.8h.1M568.9 49h.1M353 233.8h.1M330.6 265.9h.1M456.3 150.8h.1M341.5 176.6h.1M460.6 79h.1M447.1 115.3h.1M397.7 194.2h.1M447.4 109.7h.1M484.9 142.7h.1M333.2 15.3h.1M550 75.7h.1M462.7 229.7h.1M578.5 131.9h.1M546.4 75.1h.1M394.2 51.8h.1M390.4 187.7h.1M487.2 204.5h.1M597.8 91.3h.1M466.6 49.1h.1M381.9 72.4h.1M405.7 256.7h.1M330.8 131.5h.1M490.3 117.7h.1M528.5 43.3h.1M388.8 35.5h.1M589.4 100.7h.1M379.7 143.1h.1M489.9 125.7h.1M500.7 153.8h.1M503.3 112.4h.1M395.9 28.7h.1M507.5 68.3h.1M499.7 205.9h.1M536.3 220.3h.1M524.9 264.3h.1M450.1 122.1h.1M585.8 38.1h.1M572.8 264.6h.1M582.5 183.6h.1M354.5 103.7h.1M487.3 194.2h.1M524.1 155h.1M564.8 49.7h.1M512.4 13.6h.1M477.9 70.2h.1M424 158.4h.1M369.3 69.6h.1M470.8 200.9h.1M419.4 99.1h.1M424.5 194h.1M566.5 192.2h.1M427.4 89.9h.1M443.2 132.4h.1M556.3 172.4h.1M392.5 168.2h.1M473.5 182.6h.1M583 22.6h.1M417.9 196.9h.1M511.1 26h.1M354.4 198.4h.1M540.9 138.2h.1M336.5 223.4h.1M434.2 225.1h.1M349.1 254.5h.1M582.4 272h.1M448.7 184.9h.1M340.3 80.7h.1M359.5 207.8h.1M566.2 148.5h.1M583.1 147.2h.1M444.6 143.6h.1M343.9 66.7h.1M532.8 7.9h.1M377.3 54.5h.1M503.3 181.6h.1M443.3 124.7h.1M347.8 199.4h.1M360.6 202.7h.1M349.3 99.9h.1M526.9 31.1h.1M339.4 113h.1M534.8 73.6h.1M349.6 232.4h.1M528.8 177h.1M453.7 121.9h.1M501.1 214.6h.1M566.1 94.8h.1M404.9 126.4h.1M409.2 224.3h.1M487.1 183.7h.1M527.8 217.6h.1M504.7 105.9h.1M420.4 184.7h.1M352.3 214.7h.1M472.3 25.7h.1M445.7 79.3h.1M516.8 101.8h.1M467.8 19.9h.1M556.2 122.6h.1M412.7 163.6h.1M393.4 23.9h.1M426.5 84.8h.1M359.7 195.6h.1M547.4 163.2h.1M516 201.8h.1M489.5 180.1h.1M500.7 1.6h.1M509.2 219.2h.1M589.8 80h.1M408.3 84h.1M592.7 26.4h.1M404.6 28.3h.1M483.1 88.5h.1M538.1 200.5h.1M379.9 125.7h.1M440.9 91.3h.1M375 21.1h.1M363.3 167.9h.1M389.5 190.3h.1M401.5 142h.1M405.1 123h.1M476 178.2h.1M579.3 91.8h.1M442.6 227.7h.1M554.3 234h.1M333.7 8.4h.1M385.8 87.3h.1M376.2 230.9h.1M342.1 148.6h.1M394.4 267.8h.1M507.7 7.3h.1M460.8 143.6h.1M590.5 222.6h.1M408.3 26.6h.1M350.4 249h.1M587.9 97.4h.1M542.4 196.2h.1M540.3 257.2h.1M418.8 119.8h.1M454 259.2h.1M499.5 240.5h.1M574.8 232.1h.1M419.9 258h.1M462.6 138.2h.1M521.9 94.1h.1M488.2 238h.1M431.9 264.9h.1M575 1.2h.1M384.6 28.1h.1M455.3 217.6h.1M506 8.9h.1M540 182.3h.1M361.8 258.4h.1M566.3 5.2h.1M369.2 176.9h.1M483.7 253h.1M520.4 131.8h.1M558 4.4h.1M415.4 83.3h.1M549.3 52.4h.1M372.2 247h.1M387.2 226.8h.1M440.3 64.2h.1M569 6.2h.1M415.8 161.2h.1M440.7 18.7h.1M478.9 188.2h.1M402.3 258.8h.1M433.5 239.3h.1M464.5 259.1h.1M377.1 155h.1M538.1 56.9h.1M429.5 23.7h.1M437 123.2h.1M382.2 103.9h.1M562.1 149h.1M531.4 151.2h.1M488.6 114.2h.1M562.1 174.7h.1M503.6 207.4h.1M495.5 211.7h.1M351 123.7h.1M386.5 256.5h.1M385.9 234.3h.1M433.9 189.7h.1M468.4 31.5h.1M538.8 11.4h.1M477.5 118.6h.1M469 2.9h.1M432.4 269.5h.1M357.9 66.1h.1M424.5 240.3h.1M572.5 172.2h.1M515.1 156.6h.1M397.8 210.1h.1M477.6 138.1h.1M575.3 163h.1M466.4 82.8h.1M573.2 131.8h.1M568.7 149h.1M473.3 99.5h.1M449.1 72.4h.1M524.4 83.4h.1M577.7 12.3h.1M557.5 70.4h.1M482.9 154.7h.1M562.4 251.6h.1M527.7 264.3h.1M526.3 34.5h.1M430.6 253.6h.1M370 230h.1M354.6 226h.1M425.7 67.6h.1M423.4 196.2h.1M558.4 196.4h.1M520.7 129.4h.1M453.6 227.2h.1M437.8 249.9h.1M478 127.6h.1M485.9 17.7h.1M563.7 110.8h.1M418 100.8h.1M586.1 233.1h.1M377.8 181.9h.1M405.1 84.8h.1M538.2 210.1h.1M474.8 249.8h.1M414.8 140.9h.1M480.3 150h.1M471 110.6h.1M596 197.3h.1M352.4 102.6h.1M427 132.5h.1M549.6 183.9h.1M341.7 141.6h.1M376.9 82.3h.1M409 41.7h.1M558.7 98.4h.1M579.6 154.6h.1M464.5 135.9h.1M334.6 202.9h.1M522.8 57.2h.1M510.2 46h.1M370.3 113.2h.1M399.9 29.7h.1M496.3 42.8h.1M407.9 86.3h.1M370.4 170.8h.1M404.6 181.4h.1M425.2 172.1h.1M364.3 205.6h.1M336.6 185.8h.1M548.6 30h.1M385.7 136.5h.1M424 249.6h.1M450.7 48h.1M454.4 201.9h.1M402.2 210.3h.1M500.9 232.9h.1M401.3 46.5h.1M513.9 29.6h.1M515.6 178.9h.1M583.4 195.7h.1M446.9 7.7h.1M385.7 212.8h.1M598.2 119.7h.1M410 44.9h.1M414.3 188.4h.1M376.7 267.9h.1M475.7 170.7h.1M344.6 169.7h.1M552.9 195h.1M593.2 54.1h.1M535.8 171.5h.1M533.6 236.5h.1M425.7 190.2h.1M373.5 174h.1M402.6 119.8h.1M388.2 192.5h.1M439 227.4h.1M376.8 170.7h.1M340.9 206.8h.1M551.2 97.5h.1M355.8 58h.1M385.1 266.2h.1M556.1 228h.1M332.4 213.6h.1M345.4 15.9h.1M503.7 262.2h.1M400 83.9h.1M400.7 97.1h.1M458.2 144.7h.1M379.2 227.7h.1M578.8 100.6h.1M474.4 117.4h.1M572.4 232.4h.1M437.2 100.6h.1M469.7 183h.1M549 62.1h.1M579.2 263.6h.1M387.7 145.6h.1M570.2 95.9h.1M494.1 266h.1M411.1 128.9h.1M583.3 74.6h.1M390.6 201.7h.1M582.2 64.9h.1M335.7 33.3h.1M548.3 214.2h.1M530.9 161.1h.1M349.8 125.6h.1M580 14.5h.1M594.4 152.9h.1M431.7 7.5h.1M443.8 113.4h.1M476.9 161.3h.1M434.1 220.3h.1M451.9 251.1h.1M535.9 188.7h.1M329.5 181.2h.1M544.7 43.2h.1M569.2 262.9h.1M465.9 21.9h.1M368.9 79.6h.1M594.1 242.9h.1M504.1 63.9h.1M457 82.7h.1M538.2 109.4h.1M584.8 156.4h.1M469.6 120.4h.1M558.8 8.3h.1M392.9 105.2h.1M381.3 81.3h.1M554.2 144.3h.1M405.1 70.2h.1M412.3 29.9h.1M371.5 238.2h.1M551.1 55.2h.1M576.3 244.4h.1M474.2 180.4h.1M560.9 113.2h.1M461.8 170h.1M527.1 63h.1M594.5 254.5h.1M331.1 43.2h.1M532.9 25.2h.1M460.4 210.2h.1M449.1 103.6h.1M501 188.5h.1M572.3 99.9h.1M336.8 210.1h.1M499.1 22.3h.1M423 147.1h.1M397.9 256.1h.1M533.1 109.6h.1M474.8 88.4h.1M369.5 122.3h.1M341.5 127.5h.1M383.9 270.3h.1M599 201.1h.1M384.3 76.3h.1M359.7 27.3h.1M555.8 44.4h.1M379.8 148h.1M339.1 149.7h.1M409.3 246.3h.1M558.1 159.1h.1M455.3 144.7h.1M415.2 232.2h.1M541.4 204.4h.1M345.2 167h.1M417.5 36.6h.1M486.3 23h.1M329.8 241.4h.1M570.6 162h.1M407.3 98.4h.1M405 270.8h.1M352.1 225.6h.1M393.7 64.8h.1M418.6 202.5h.1M485.2 30h.1M499.6 244.1h.1M399.9 115.3h.1M470.7 125.7h.1M580.4 102.9h.1M467.9 249.4h.1M592.6 3.6h.1M468.6 150h.1M462.5 25.3h.1M430.6 100.5h.1M329.3 49.4h.1M407.6 122h.1M404.8 267.2h.1M467.8 153.3h.1M461 96.2h.1M360.9 149.9h.1M535.9 139.3h.1M401.8 182h.1M339.1 247.2h.1M346.5 95.3h.1M538.2 186.4h.1M442.9 176.3h.1M590.2 164h.1M509.8 137.5h.1M597.4 250h.1M551.3 112.4h.1M401.8 69.4h.1M386.1 82.6h.1M424.5 17.4h.1M433.7 186.8h.1M405.1 228.6h.1M477.2 43.8h.1M344.6 52.8h.1M485.2 260.1h.1M411.1 269.8h.1M354.8 108.1h.1M414.9 92.9h.1M486.5 122.2h.1M533.8 39.8h.1M449.8 209h.1M370.9 83.2h.1M408.9 29h.1M465.5 203.9h.1M354.7 129h.1M524.7 238.7h.1M470.8 238.4h.1M534.1 58.9h.1M477.5 5h.1M423.6 202.9h.1M366.8 49.2h.1M409.1 13.1h.1M528.5 34.1h.1M519.2 24.2h.1M535 209.7h.1M441.8 96.3h.1M391.7 249.4h.1M444.9 165.3h.1M413.5 21h.1M476.9 121.8h.1M477.3 90.5h.1M376.7 159.6h.1M416.3 242h.1M446.8 22.1h.1M360.7 233h.1M418.9 123h.1M384.9 253.3h.1M366.9 3.3h.1M459.4 147.3h.1M371.5 138.7h.1M367.7 240.6h.1M423.3 36h.1M583.1 207.7h.1M357 151.7h.1M524.7 252.9h.1M521.7 214.3h.1M480.2 243.5h.1M432.4 204.3h.1M502.7 144.9h.1M395.4 185.6h.1M541.6 219.2h.1M343.6 180.8h.1M548.5 72h.1M395.7 71.3h.1M438.4 233.8h.1M509.6 178.2h.1M505.6 87.3h.1M479.6 169.5h.1M591.9 181h.1M394.2 55h.1M536.8 53.3h.1M346.6 248.5h.1M504.1 237.2h.1M379.9 160h.1M329.1 121.1h.1M374.9 143.3h.1M364 18h.1M361.1 59.8h.1M411 95.4h.1M582.4 15.1h.1M445.9 99.5h.1M490.4 56.9h.1M502.9 210h.1M349.3 190.9h.1M452 126.4h.1M420 209.8h.1M458.6 24.3h.1M544.4 213.7h.1M445.2 174.4h.1M418.9 168.8h.1M483.7 239.9h.1M509.9 212.5h.1M398.7 33.1h.1M389.1 76.3h.1M577.3 237h.1M447.5 95.1h.1M384.3 24.3h.1M381.9 190.9h.1M335.3 252.2h.1M464.3 65.4h.1M576.4 141.6h.1M507.4 228.2h.1M399.7 244.2h.1M543.9 96.4h.1M437.8 254.9h.1M579.5 61.9h.1M332.4 168.8h.1M471.8 62h.1M368.4 255.6h.1M404 38h.1M524.1 114.8h.1M359.3 131.2h.1M370.4 216.4h.1M506.7 122.7h.1M435 263.3h.1M333.5 221.4h.1M356.7 79.2h.1M443.7 247.6h.1M524 271.8h.1M531.6 266.8h.1M557.9 212.5h.1M493.6 193.8h.1M375.3 62.3h.1M438.8 262.4h.1M408.5 192.9h.1M483.3 162.5h.1M453.6 52.8h.1M578.3 187.1h.1M353.8 6.3h.1M489.5 98.1h.1M509.5 156.8h.1M454.6 19.9h.1M330.9 159.2h.1M545.7 165.2h.1M436 12.7h.1M524.9 198.8h.1"/><clipPath id="rc"><rect x="328" y="1" width="271.500" height="272"/></clipPath>
</defs>
<rect width="600" height="273" fill="#000"/>
<g mask="url(#vm)"><rect x="0" y="0" width="328" height="273" fill="#1e1e1e"/><rect x="0" y="0" width="328" height="273" filter="url(#nf)"/></g>
<rect x="328" y="0" width="272" height="273" fill="#060606"/>
<g clip-path="url(#rc)"><g filter="url(#bl)"><use href="#dg0" stroke="#fff" stroke-opacity="0.42" stroke-width="4.3" stroke-linecap="round" fill="none"/><use href="#dg1" stroke="#fff" stroke-opacity="0.30" stroke-width="4.1" stroke-linecap="round" fill="none"/><use href="#dg2" stroke="#fff" stroke-opacity="0.19" stroke-width="3.9" stroke-linecap="round" fill="none"/><use href="#dg0" stroke="#fff" stroke-opacity="0.75" stroke-width="2.6" stroke-linecap="round" fill="none"/><use href="#dg1" stroke="#fff" stroke-opacity="0.54" stroke-width="2.4" stroke-linecap="round" fill="none"/><use href="#dg2" stroke="#fff" stroke-opacity="0.35" stroke-width="2.2" stroke-linecap="round" fill="none"/></g></g>
<g stroke="#dade2c" stroke-width="1.050" fill="none">
<path d="M328.100 0V273M419 0V273M509.400 0V273M327.500 1.100H600M327.500 91.900H600M327.500 182.700H600"/>
</g>
<g stroke="#c6cc30" stroke-width="1.300" fill="none">
<rect x="82.05" y="69.15" width="12.5" height="11.3"/><rect x="158.75" y="69.15" width="12.5" height="11.3"/><rect x="234.85" y="69.15" width="12.5" height="11.3"/><rect x="82.05" y="131.65" width="12.5" height="11.3"/><rect x="158.75" y="131.65" width="12.5" height="11.3"/><rect x="234.85" y="131.65" width="12.5" height="11.3"/><rect x="82.05" y="194.95" width="12.5" height="11.3"/><rect x="158.75" y="194.95" width="12.5" height="11.3"/><rect x="234.85" y="194.95" width="12.5" height="11.3"/>
</g>
<text x="6" y="13" font-family="Liberation Sans, sans-serif" font-size="8.500" fill="#d2d23c" textLength="88" lengthAdjust="spacingAndGlyphs">001 1_1101_A. 383 575</text>
</svg></div>
</body></html>
